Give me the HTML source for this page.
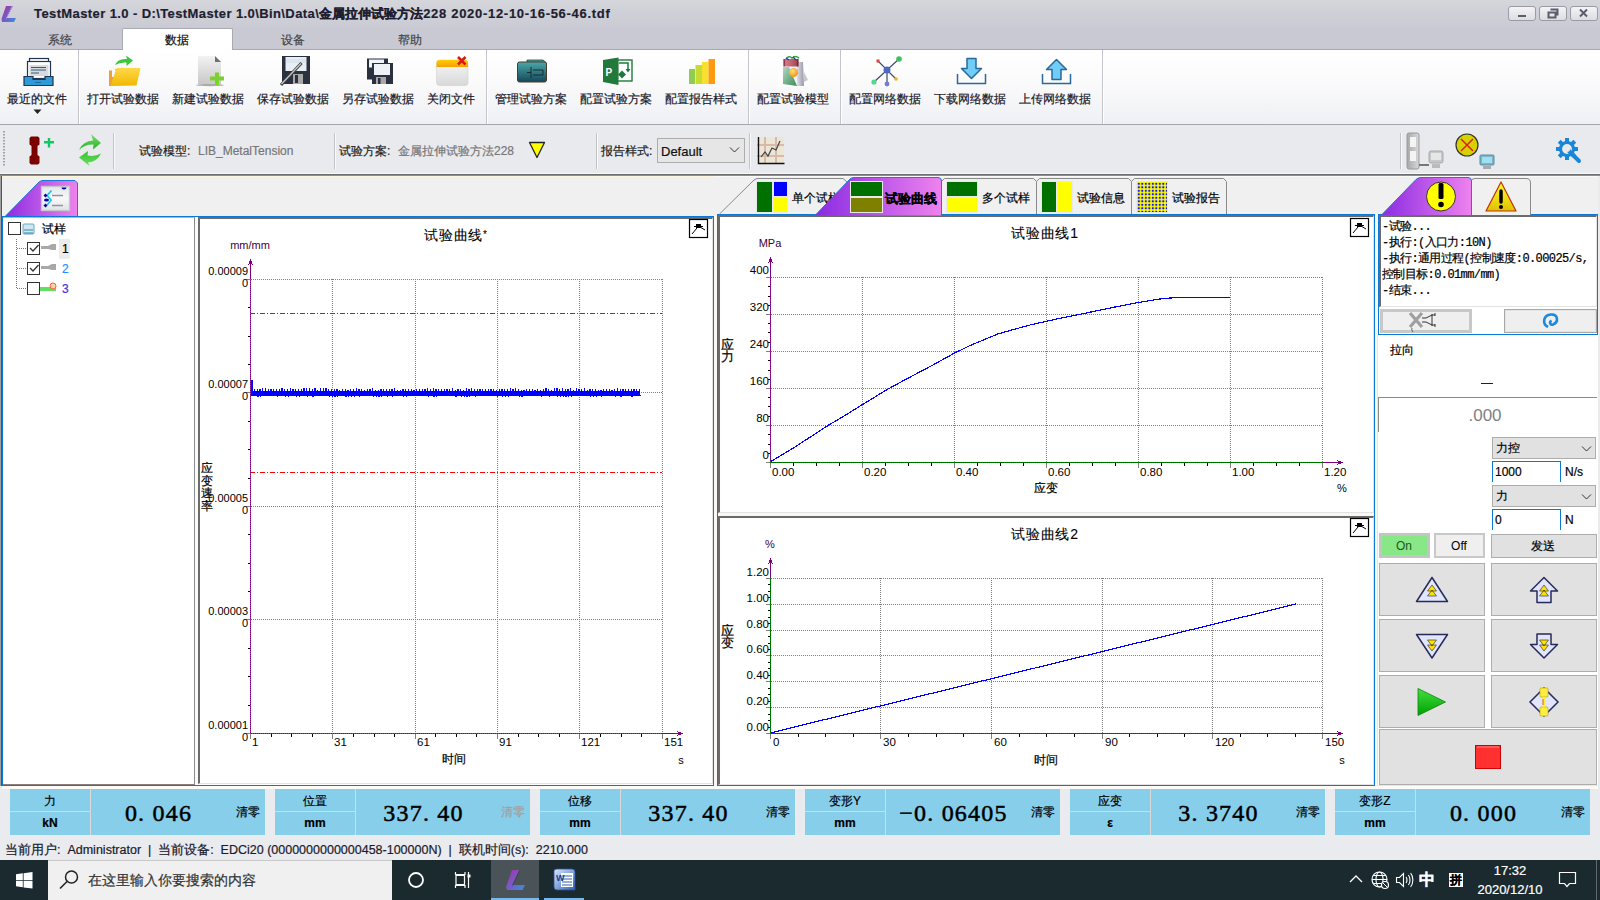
<!DOCTYPE html><html><head><meta charset="utf-8"><style>
*{box-sizing:border-box;margin:0;padding:0}
html,body{width:1600px;height:900px;overflow:hidden;background:#f0f0f0;font-family:"Liberation Sans",sans-serif;font-size:12px;color:#000}
.a{position:absolute}
.t{position:absolute;white-space:nowrap;line-height:1;-webkit-text-stroke:0.2px currentColor}
svg{position:absolute;overflow:visible}
</style></head><body>
<div class="a" style="left:0px;top:0px;width:1600px;height:28px;background:linear-gradient(#d5d6db,#cfd0d7 50%,#c9cad3)"></div>
<svg style="left:0px;top:4px" width="20" height="20" viewBox="0 0 20 20" ><defs><linearGradient id="lg1" x1="0" y1="0" x2="1" y2="1"><stop offset="0" stop-color="#b02aa8"/><stop offset="1" stop-color="#3a8ee0"/></linearGradient></defs><path d="M6 2 L13 2 L7 14 L16 14 L14 18 L2 18 L1.5 15 Z" fill="url(#lg1)"/><path d="M12 2.5 L6.5 14.5" stroke="#e8e8f0" stroke-width="1" stroke-dasharray="1 1"/></svg>
<div class="t" style="left:34px;top:7px;font-weight:bold;font-size:13px;color:#1e1e30"><span style="letter-spacing:0.4px">TestMaster 1.0 - D:\TestMaster 1.0\Bin\Data\</span>金属拉伸试验方法<span style="letter-spacing:0.7px">228 2020-12-10-16-56-46.tdf</span></div>
<div class="a" style="left:1508px;top:6px;width:28px;height:15px;border:1px solid #9a9ba5;border-radius:3px;background:linear-gradient(#f4f4f6,#dcdce2)"></div>
<div class="a" style="left:1539px;top:6px;width:28px;height:15px;border:1px solid #9a9ba5;border-radius:3px;background:linear-gradient(#f4f4f6,#dcdce2)"></div>
<div class="a" style="left:1570px;top:6px;width:28px;height:15px;border:1px solid #9a9ba5;border-radius:3px;background:linear-gradient(#f4f4f6,#dcdce2)"></div>
<svg style="left:1508px;top:6px" width="28" height="15" viewBox="0 0 28 15" ><rect x="10" y="9" width="8" height="2" fill="#5a5c6a"/></svg>
<svg style="left:1539px;top:6px" width="28" height="15" viewBox="0 0 28 15" ><path d="M11.5 3.5h7v5h-2M9.5 6.5h7v5h-7z" fill="none" stroke="#5a5c6a" stroke-width="2"/></svg>
<svg style="left:1570px;top:6px" width="28" height="15" viewBox="0 0 28 15" ><path d="M10 3.5l7 7M17 3.5l-7 7" stroke="#5a5c6a" stroke-width="2"/></svg>
<div class="a" style="left:0px;top:28px;width:1600px;height:22px;background:#c8c9d3"></div>
<div class="a" style="left:0px;top:49px;width:122px;height:1px;background:#a8a9b4"></div>
<div class="a" style="left:233px;top:49px;width:1367px;height:1px;background:#a8a9b4"></div>
<div class="a" style="left:122px;top:28px;width:111px;height:22px;background:#fff;border:1px solid #a9aab3;border-bottom:none;border-radius:2px 2px 0 0"></div>
<div class="t" style="left:-140px;top:34px;width:400px;text-align:center;font-size:12px;color:#444;">系统</div>
<div class="t" style="left:-23px;top:34px;width:400px;text-align:center;font-size:12px;color:#111;">数据</div>
<div class="t" style="left:93px;top:34px;width:400px;text-align:center;font-size:12px;color:#444;">设备</div>
<div class="t" style="left:210px;top:34px;width:400px;text-align:center;font-size:12px;color:#444;">帮助</div>
<div class="a" style="left:0px;top:50px;width:1600px;height:75px;background:linear-gradient(#ffffff,#fafafb 45%,#eff0f4);border-bottom:1px solid #a4a5ad"></div>
<div class="a" style="left:78px;top:50px;width:1px;height:74px;background:#c4c5cc"></div>
<div class="a" style="left:79px;top:50px;width:1px;height:74px;background:#fff"></div>
<div class="a" style="left:486px;top:50px;width:1px;height:74px;background:#c4c5cc"></div>
<div class="a" style="left:487px;top:50px;width:1px;height:74px;background:#fff"></div>
<div class="a" style="left:748px;top:50px;width:1px;height:74px;background:#c4c5cc"></div>
<div class="a" style="left:749px;top:50px;width:1px;height:74px;background:#fff"></div>
<div class="a" style="left:840px;top:50px;width:1px;height:74px;background:#c4c5cc"></div>
<div class="a" style="left:841px;top:50px;width:1px;height:74px;background:#fff"></div>
<div class="a" style="left:1102px;top:50px;width:1px;height:74px;background:#c4c5cc"></div>
<div class="a" style="left:1103px;top:50px;width:1px;height:74px;background:#fff"></div>
<div class="t" style="left:-163px;top:93px;width:400px;text-align:center;font-size:12px;color:#1a1a2a">最近的文件</div>
<div class="t" style="left:-77px;top:93px;width:400px;text-align:center;font-size:12px;color:#1a1a2a">打开试验数据</div>
<div class="t" style="left:8px;top:93px;width:400px;text-align:center;font-size:12px;color:#1a1a2a">新建试验数据</div>
<div class="t" style="left:93px;top:93px;width:400px;text-align:center;font-size:12px;color:#1a1a2a">保存试验数据</div>
<div class="t" style="left:178px;top:93px;width:400px;text-align:center;font-size:12px;color:#1a1a2a">另存试验数据</div>
<div class="t" style="left:251px;top:93px;width:400px;text-align:center;font-size:12px;color:#1a1a2a">关闭文件</div>
<div class="t" style="left:331px;top:93px;width:400px;text-align:center;font-size:12px;color:#1a1a2a">管理试验方案</div>
<div class="t" style="left:416px;top:93px;width:400px;text-align:center;font-size:12px;color:#1a1a2a">配置试验方案</div>
<div class="t" style="left:501px;top:93px;width:400px;text-align:center;font-size:12px;color:#1a1a2a">配置报告样式</div>
<div class="t" style="left:593px;top:93px;width:400px;text-align:center;font-size:12px;color:#1a1a2a">配置试验模型</div>
<div class="t" style="left:685px;top:93px;width:400px;text-align:center;font-size:12px;color:#1a1a2a">配置网络数据</div>
<div class="t" style="left:770px;top:93px;width:400px;text-align:center;font-size:12px;color:#1a1a2a">下载网络数据</div>
<div class="t" style="left:855px;top:93px;width:400px;text-align:center;font-size:12px;color:#1a1a2a">上传网络数据</div>
<svg style="left:33px;top:109px" width="10" height="6" viewBox="0 0 10 6" ><path d="M0.5 0.5h8l-4 4.5z" fill="#222"/></svg>
<div class="a" style="left:0px;top:125px;width:1600px;height:50px;background:#e9eaee"></div>
<div class="a" style="left:0px;top:173px;width:1600px;height:1px;background:#f8f8fa"></div>
<div class="a" style="left:0px;top:174px;width:1600px;height:1px;background:#6e6e6e"></div>
<div class="a" style="left:0px;top:175px;width:1600px;height:1px;background:#8c8c8c"></div>
<svg style="left:2px;top:131px" width="4" height="36" viewBox="0 0 4 36" ><rect x="1" y="0" width="2" height="1.5" fill="#a0a0a8"/><rect x="1" y="3" width="2" height="1.5" fill="#a0a0a8"/><rect x="1" y="6" width="2" height="1.5" fill="#a0a0a8"/><rect x="1" y="9" width="2" height="1.5" fill="#a0a0a8"/><rect x="1" y="12" width="2" height="1.5" fill="#a0a0a8"/><rect x="1" y="15" width="2" height="1.5" fill="#a0a0a8"/><rect x="1" y="18" width="2" height="1.5" fill="#a0a0a8"/><rect x="1" y="21" width="2" height="1.5" fill="#a0a0a8"/><rect x="1" y="24" width="2" height="1.5" fill="#a0a0a8"/><rect x="1" y="27" width="2" height="1.5" fill="#a0a0a8"/><rect x="1" y="30" width="2" height="1.5" fill="#a0a0a8"/><rect x="1" y="33" width="2" height="1.5" fill="#a0a0a8"/></svg>
<svg style="left:25px;top:135px" width="35" height="32" viewBox="0 0 35 32" ><path d="M6 1.5h7l1.5 1.5v6.5l-2 1.5v9l2 1.5v6.5l-1.5 1.5h-7l-1.5 -1.5v-6.5l2 -1.5v-9l-2 -1.5v-6.5z" fill="#7d0000"/><path d="M19 7.2h10M24 3v9.5" stroke="#10c868" stroke-width="2.4"/></svg>
<svg style="left:77px;top:133px" width="26" height="34" viewBox="0 0 26 34" ><defs><linearGradient id="gr1" x1="0" y1="0" x2="0" y2="1"><stop offset="0" stop-color="#7ee070"/><stop offset="1" stop-color="#22b020"/></linearGradient><linearGradient id="gr2" x1="0" y1="0" x2="0" y2="1"><stop offset="0" stop-color="#30c030"/><stop offset="1" stop-color="#70e060"/></linearGradient></defs><path d="M2 17 Q6 8 16 7.5 L14 1 L24 10 L16 16.5 L16.5 11.5 Q8 11 2 17z" fill="url(#gr1)"/><path d="M24 20.5 Q20 29 11 29.5 L12.5 33 L2 24.5 L11 18 L10.5 22.5 Q18 24 24 20.5z" fill="url(#gr2)"/></svg>
<div class="a" style="left:113px;top:133px;width:1px;height:36px;background:#c2c3c8"></div>
<div class="a" style="left:114px;top:133px;width:1px;height:36px;background:#fafafa"></div>
<div class="a" style="left:334px;top:133px;width:1px;height:36px;background:#c2c3c8"></div>
<div class="a" style="left:335px;top:133px;width:1px;height:36px;background:#fafafa"></div>
<div class="a" style="left:596px;top:133px;width:1px;height:36px;background:#c2c3c8"></div>
<div class="a" style="left:597px;top:133px;width:1px;height:36px;background:#fafafa"></div>
<div class="a" style="left:749px;top:133px;width:1px;height:36px;background:#c2c3c8"></div>
<div class="a" style="left:750px;top:133px;width:1px;height:36px;background:#fafafa"></div>
<div class="a" style="left:1400px;top:133px;width:1px;height:36px;background:#c2c3c8"></div>
<div class="a" style="left:1401px;top:133px;width:1px;height:36px;background:#fafafa"></div>
<div class="t" style="left:139px;top:145px;font-size:12px;color:#222">试验模型:</div>
<div class="t" style="left:198px;top:145px;font-size:12px;color:#777">LIB_MetalTension</div>
<div class="t" style="left:339px;top:145px;font-size:12px;color:#222">试验方案:</div>
<div class="t" style="left:398px;top:145px;font-size:12px;color:#777">金属拉伸试验方法228</div>
<svg style="left:528px;top:141px" width="19" height="19" viewBox="0 0 19 19" ><path d="M1.5 1.5h15l-7.5 15z" fill="#ffff00" stroke="#222" stroke-width="1.3" stroke-linejoin="round"/></svg>
<div class="t" style="left:601px;top:145px;font-size:12px;color:#222">报告样式:</div>
<div class="a" style="left:657px;top:138px;width:88px;height:25px;background:#e6e6e6;border:1px solid #adadad"></div>
<div class="t" style="left:661px;top:145px;font-size:13px;color:#111">Default</div>
<svg style="left:729px;top:146px" width="12" height="8" viewBox="0 0 12 8" ><path d="M1 1.5l4.5 4.5 4.5-4.5" fill="none" stroke="#333" stroke-width="1"/></svg>
<svg style="left:755px;top:135px" width="30" height="30" viewBox="0 0 30 30" ><rect x="2" y="2" width="27" height="26" fill="#ece6d6"/><path d="M2 10h27M2 21h27M10 2v26M21 2v26" stroke="#d9b9a9" stroke-width="2"/><path d="M3.5 2v26.5h26" fill="none" stroke="#111" stroke-width="1.4"/><path d="M6 22l4-5 3 4 4-8 4 2 4-9" fill="none" stroke="#444" stroke-width="1.2"/></svg>
<svg style="left:1405px;top:131px" width="45" height="42" viewBox="0 0 45 42" ><defs><linearGradient id="gm1" x1="0" x2="1"><stop offset="0" stop-color="#a8a8a8"/><stop offset="1" stop-color="#d8d8d8"/></linearGradient></defs><rect x="2" y="2" width="12" height="36" rx="2" fill="url(#gm1)" stroke="#9a9a9a"/><rect x="5" y="6" width="6" height="10" fill="#f4f4f4"/><rect x="5" y="20" width="6" height="10" fill="#f4f4f4"/><path d="M14 34h10" stroke="#777" stroke-width="2"/><rect x="24" y="20" width="14" height="12" rx="2" fill="#c8c8c8" stroke="#aaa"/><rect x="26" y="22" width="10" height="7" fill="#e6e6e6"/><rect x="27" y="33" width="8" height="4" fill="#bbb"/></svg>
<svg style="left:1452px;top:131px" width="46" height="40" viewBox="0 0 46 40" ><circle cx="15" cy="14" r="11" fill="#d6d200" stroke="#333" stroke-width="1.2"/><path d="M9 8l12 12M21 8l-12 12" stroke="#e02020" stroke-width="1.5"/><rect x="28" y="24" width="14" height="10" rx="1" fill="#7fb3c9" stroke="#5a8da3"/><rect x="30" y="26" width="10" height="6" fill="#9fe0f0"/><rect x="31" y="35" width="8" height="3" fill="#aaa"/></svg>
<svg style="left:1555px;top:137px" width="30" height="28" viewBox="0 0 30 28" ><g fill="none" stroke="#1a86d8" stroke-width="3.2"><circle cx="12" cy="12" r="6.5"/></g><g fill="#1a86d8"><rect x="10" y="1" width="4" height="5" transform="rotate(0 12 12)"/><rect x="10" y="1" width="4" height="5" transform="rotate(45 12 12)"/><rect x="10" y="1" width="4" height="5" transform="rotate(90 12 12)"/><rect x="10" y="1" width="4" height="5" transform="rotate(135 12 12)"/><rect x="10" y="1" width="4" height="5" transform="rotate(180 12 12)"/><rect x="10" y="1" width="4" height="5" transform="rotate(225 12 12)"/><rect x="10" y="1" width="4" height="5" transform="rotate(270 12 12)"/><rect x="10" y="1" width="4" height="5" transform="rotate(315 12 12)"/></g><path d="M13 13l11 11" stroke="#1a86d8" stroke-width="4" stroke-linecap="round"/><circle cx="12" cy="12" r="3" fill="#e9eaee"/></svg>
<div class="a" style="left:0px;top:176px;width:1600px;height:41px;background:#f0f0f0"></div>
<div class="a" style="left:0px;top:176px;width:1600px;height:1px;background:#fafafa"></div>
<div class="a" style="left:2px;top:176px;width:712px;height:1px;background:#fdf6dc"></div>
<svg style="left:0px;top:170px" width="82" height="50" viewBox="0 0 82 50" ><defs><linearGradient id="pg" x1="0" x2="1"><stop offset="0" stop-color="#8a2be2"/><stop offset="1" stop-color="#ee82ee"/></linearGradient></defs><path d="M4.5 47 L39 12 L42 10.5 L75 10.5 L77.5 13 L77.5 47 Z" fill="url(#pg)" stroke="#1a7ad4" stroke-width="1"/><rect x="5" y="46" width="72" height="1" fill="#f080f0"/></svg>
<svg style="left:40px;top:185px" width="32" height="27" viewBox="0 0 32 27" ><defs><linearGradient id="ig" x1="0" y1="0" x2="0" y2="1"><stop offset="0" stop-color="#e4e8ec"/><stop offset="0.5" stop-color="#f8f8f8"/><stop offset="1" stop-color="#e0e4e8"/></linearGradient></defs><rect x="1.5" y="1.5" width="28" height="24" fill="url(#ig)" stroke="#c4c8cc" stroke-width="1.4"/><path d="M12 10.5h11M12 20.5h11" stroke="#9890a8" stroke-width="1.6"/><path d="M11.5 5.5l-4.5 5 4.5 5M11.5 15l-4.5 5" fill="none" stroke="#10c8e0" stroke-width="1.6"/><path d="M5.5 8.5l2 2-2 2-2-2z M5.5 18.5l2 2-2 2-2-2z" fill="#0000b0"/><ellipse cx="6.5" cy="15" rx="2.5" ry="1.6" fill="#0000b0"/><path d="M21.5 2.5h5a2.5 2 0 0 1 -5 0z" fill="#0000b0"/></svg>
<div class="a" style="left:0px;top:176px;width:1px;height:610px;background:#a0a0a0"></div>
<div class="a" style="left:1px;top:176px;width:1px;height:610px;background:#555"></div>
<div class="a" style="left:2px;top:216px;width:712px;height:570px;border:1px solid #0a78d7;background:#fff"></div>
<div class="a" style="left:3px;top:217px;width:192px;height:568px;background:#fff;border-top:1px solid #b8b8b8;border-right:1px solid #878c92;border-bottom:1px solid #8a7f7a"></div>
<div class="a" style="left:195px;top:217px;width:3px;height:568px;background:#fdfaf6"></div>
<div class="a" style="left:198px;top:217px;width:515px;height:567px;background:#fff;border-left:2px solid #6b6b6b;border-top:2px solid #6b6b6b;border-right:1px solid #e3e3e3;border-bottom:1px solid #e3e3e3"></div>
<div class="a" style="left:714px;top:216px;width:3px;height:570px;background:#fbf8f4"></div>
<div class="a" style="left:717px;top:214px;width:658px;height:572px;border:1px solid #0a78d7;background:#fbf8f4"></div>
<div class="a" style="left:718px;top:215px;width:656px;height:298px;background:#fff;border-left:2px solid #6b6b6b;border-top:2px solid #6b6b6b;border-right:1px solid #e3e3e3;border-bottom:1px solid #e3e3e3"></div>
<div class="a" style="left:718px;top:516px;width:656px;height:269px;background:#fff;border-left:2px solid #6b6b6b;border-top:2px solid #6b6b6b;border-right:1px solid #e3e3e3;border-bottom:1px solid #e3e3e3"></div>
<div class="a" style="left:1375px;top:214px;width:3px;height:572px;background:#fbf8f4"></div>
<div class="a" style="left:1377px;top:335px;width:221px;height:451px;background:#fff;border-left:1px solid #e6e6e6;border-bottom:1px solid #e6e6e6"></div>
<div class="a" style="left:1378px;top:214px;width:220px;height:121px;border:1px solid #0a78d7;background:#fff"></div>
<div class="a" style="left:1598px;top:176px;width:2px;height:610px;background:#eaebef"></div>
<svg style="left:0;top:0" width="1600" height="900" shape-rendering="crispEdges"><line x1="250.5" y1="279" x2="250.5" y2="733" stroke="#808080" stroke-dasharray="1 1"/><line x1="332.5" y1="279" x2="332.5" y2="733" stroke="#808080" stroke-dasharray="1 1"/><line x1="415.5" y1="279" x2="415.5" y2="733" stroke="#808080" stroke-dasharray="1 1"/><line x1="497.5" y1="279" x2="497.5" y2="733" stroke="#808080" stroke-dasharray="1 1"/><line x1="579.5" y1="279" x2="579.5" y2="733" stroke="#808080" stroke-dasharray="1 1"/><line x1="662.5" y1="279" x2="662.5" y2="733" stroke="#808080" stroke-dasharray="1 1"/><line x1="251" y1="279.5" x2="662" y2="279.5" stroke="#808080" stroke-dasharray="1 1"/><line x1="251" y1="392.5" x2="662" y2="392.5" stroke="#808080" stroke-dasharray="1 1"/><line x1="251" y1="506.5" x2="662" y2="506.5" stroke="#808080" stroke-dasharray="1 1"/><line x1="251" y1="619.5" x2="662" y2="619.5" stroke="#808080" stroke-dasharray="1 1"/><line x1="251" y1="733.5" x2="662" y2="733.5" stroke="#808080" stroke-dasharray="1 1"/><line x1="250" y1="313.5" x2="662" y2="313.5" stroke="#ff0000" stroke-dasharray="5 2 1 2"/><line x1="250" y1="472.5" x2="662" y2="472.5" stroke="#ff0000" stroke-dasharray="5 2 1 2"/><rect x="250" y="391" width="390" height="5" fill="#0000ff"/><rect x="251.0" y="390" width="1.3" height="2" fill="#0000ff"/><rect x="251.8" y="395" width="1.2" height="1" fill="#0000ff"/><rect x="253.8" y="389" width="1.3" height="3" fill="#0000ff"/><rect x="254.6" y="395" width="1.2" height="1" fill="#0000ff"/><rect x="256.5" y="389" width="1.3" height="3" fill="#0000ff"/><rect x="257.3" y="395" width="1.2" height="2" fill="#0000ff"/><rect x="259.2" y="389" width="1.3" height="3" fill="#0000ff"/><rect x="260.1" y="395" width="1.2" height="2" fill="#0000ff"/><rect x="262.0" y="388" width="1.3" height="4" fill="#0000ff"/><rect x="262.8" y="395" width="1.2" height="1" fill="#0000ff"/><rect x="264.8" y="388" width="1.3" height="4" fill="#0000ff"/><rect x="265.6" y="395" width="1.2" height="1" fill="#0000ff"/><rect x="267.5" y="389" width="1.3" height="3" fill="#0000ff"/><rect x="268.3" y="395" width="1.2" height="1" fill="#0000ff"/><rect x="270.2" y="389" width="1.3" height="3" fill="#0000ff"/><rect x="271.1" y="395" width="1.2" height="1" fill="#0000ff"/><rect x="273.0" y="389" width="1.3" height="3" fill="#0000ff"/><rect x="273.8" y="395" width="1.2" height="1" fill="#0000ff"/><rect x="275.8" y="389" width="1.3" height="3" fill="#0000ff"/><rect x="276.6" y="395" width="1.2" height="2" fill="#0000ff"/><rect x="278.5" y="389" width="1.3" height="3" fill="#0000ff"/><rect x="279.3" y="395" width="1.2" height="1" fill="#0000ff"/><rect x="281.2" y="388" width="1.3" height="4" fill="#0000ff"/><rect x="282.1" y="395" width="1.2" height="1" fill="#0000ff"/><rect x="284.0" y="389" width="1.3" height="3" fill="#0000ff"/><rect x="284.8" y="395" width="1.2" height="2" fill="#0000ff"/><rect x="286.8" y="389" width="1.3" height="3" fill="#0000ff"/><rect x="287.6" y="395" width="1.2" height="2" fill="#0000ff"/><rect x="289.5" y="388" width="1.3" height="4" fill="#0000ff"/><rect x="290.3" y="395" width="1.2" height="1" fill="#0000ff"/><rect x="292.2" y="389" width="1.3" height="3" fill="#0000ff"/><rect x="293.1" y="395" width="1.2" height="1" fill="#0000ff"/><rect x="295.0" y="389" width="1.3" height="3" fill="#0000ff"/><rect x="295.8" y="395" width="1.2" height="2" fill="#0000ff"/><rect x="297.8" y="389" width="1.3" height="3" fill="#0000ff"/><rect x="298.6" y="395" width="1.2" height="2" fill="#0000ff"/><rect x="300.5" y="389" width="1.3" height="3" fill="#0000ff"/><rect x="301.3" y="395" width="1.2" height="1" fill="#0000ff"/><rect x="303.2" y="388" width="1.3" height="4" fill="#0000ff"/><rect x="304.1" y="395" width="1.2" height="1" fill="#0000ff"/><rect x="306.0" y="388" width="1.3" height="4" fill="#0000ff"/><rect x="306.8" y="395" width="1.2" height="2" fill="#0000ff"/><rect x="308.8" y="388" width="1.3" height="4" fill="#0000ff"/><rect x="309.6" y="395" width="1.2" height="1" fill="#0000ff"/><rect x="311.5" y="389" width="1.3" height="3" fill="#0000ff"/><rect x="312.3" y="395" width="1.2" height="2" fill="#0000ff"/><rect x="314.2" y="388" width="1.3" height="4" fill="#0000ff"/><rect x="315.1" y="395" width="1.2" height="1" fill="#0000ff"/><rect x="317.0" y="390" width="1.3" height="2" fill="#0000ff"/><rect x="317.8" y="395" width="1.2" height="1" fill="#0000ff"/><rect x="319.8" y="388" width="1.3" height="4" fill="#0000ff"/><rect x="320.6" y="395" width="1.2" height="1" fill="#0000ff"/><rect x="322.5" y="388" width="1.3" height="4" fill="#0000ff"/><rect x="323.3" y="395" width="1.2" height="1" fill="#0000ff"/><rect x="325.2" y="388" width="1.3" height="4" fill="#0000ff"/><rect x="326.1" y="395" width="1.2" height="1" fill="#0000ff"/><rect x="328.0" y="389" width="1.3" height="3" fill="#0000ff"/><rect x="328.8" y="395" width="1.2" height="2" fill="#0000ff"/><rect x="330.8" y="389" width="1.3" height="3" fill="#0000ff"/><rect x="331.6" y="395" width="1.2" height="2" fill="#0000ff"/><rect x="333.5" y="389" width="1.3" height="3" fill="#0000ff"/><rect x="334.3" y="395" width="1.2" height="2" fill="#0000ff"/><rect x="336.2" y="389" width="1.3" height="3" fill="#0000ff"/><rect x="337.1" y="395" width="1.2" height="2" fill="#0000ff"/><rect x="339.0" y="390" width="1.3" height="2" fill="#0000ff"/><rect x="339.8" y="395" width="1.2" height="1" fill="#0000ff"/><rect x="341.8" y="389" width="1.3" height="3" fill="#0000ff"/><rect x="342.6" y="395" width="1.2" height="1" fill="#0000ff"/><rect x="344.5" y="389" width="1.3" height="3" fill="#0000ff"/><rect x="345.3" y="395" width="1.2" height="2" fill="#0000ff"/><rect x="347.2" y="390" width="1.3" height="2" fill="#0000ff"/><rect x="348.1" y="395" width="1.2" height="2" fill="#0000ff"/><rect x="350.0" y="389" width="1.3" height="3" fill="#0000ff"/><rect x="350.8" y="395" width="1.2" height="2" fill="#0000ff"/><rect x="352.8" y="389" width="1.3" height="3" fill="#0000ff"/><rect x="353.6" y="395" width="1.2" height="2" fill="#0000ff"/><rect x="355.5" y="388" width="1.3" height="4" fill="#0000ff"/><rect x="356.3" y="395" width="1.2" height="1" fill="#0000ff"/><rect x="358.2" y="389" width="1.3" height="3" fill="#0000ff"/><rect x="359.1" y="395" width="1.2" height="2" fill="#0000ff"/><rect x="361.0" y="389" width="1.3" height="3" fill="#0000ff"/><rect x="361.8" y="395" width="1.2" height="1" fill="#0000ff"/><rect x="363.8" y="390" width="1.3" height="2" fill="#0000ff"/><rect x="364.6" y="395" width="1.2" height="1" fill="#0000ff"/><rect x="366.5" y="389" width="1.3" height="3" fill="#0000ff"/><rect x="367.3" y="395" width="1.2" height="1" fill="#0000ff"/><rect x="369.2" y="389" width="1.3" height="3" fill="#0000ff"/><rect x="370.1" y="395" width="1.2" height="1" fill="#0000ff"/><rect x="372.0" y="388" width="1.3" height="4" fill="#0000ff"/><rect x="372.8" y="395" width="1.2" height="2" fill="#0000ff"/><rect x="374.8" y="390" width="1.3" height="2" fill="#0000ff"/><rect x="375.6" y="395" width="1.2" height="2" fill="#0000ff"/><rect x="377.5" y="390" width="1.3" height="2" fill="#0000ff"/><rect x="378.3" y="395" width="1.2" height="2" fill="#0000ff"/><rect x="380.2" y="389" width="1.3" height="3" fill="#0000ff"/><rect x="381.1" y="395" width="1.2" height="2" fill="#0000ff"/><rect x="383.0" y="389" width="1.3" height="3" fill="#0000ff"/><rect x="383.8" y="395" width="1.2" height="1" fill="#0000ff"/><rect x="385.8" y="389" width="1.3" height="3" fill="#0000ff"/><rect x="386.6" y="395" width="1.2" height="2" fill="#0000ff"/><rect x="388.5" y="389" width="1.3" height="3" fill="#0000ff"/><rect x="389.3" y="395" width="1.2" height="1" fill="#0000ff"/><rect x="391.2" y="389" width="1.3" height="3" fill="#0000ff"/><rect x="392.1" y="395" width="1.2" height="2" fill="#0000ff"/><rect x="394.0" y="388" width="1.3" height="4" fill="#0000ff"/><rect x="394.8" y="395" width="1.2" height="1" fill="#0000ff"/><rect x="396.8" y="390" width="1.3" height="2" fill="#0000ff"/><rect x="397.6" y="395" width="1.2" height="1" fill="#0000ff"/><rect x="399.5" y="390" width="1.3" height="2" fill="#0000ff"/><rect x="400.3" y="395" width="1.2" height="1" fill="#0000ff"/><rect x="402.2" y="389" width="1.3" height="3" fill="#0000ff"/><rect x="403.1" y="395" width="1.2" height="2" fill="#0000ff"/><rect x="405.0" y="389" width="1.3" height="3" fill="#0000ff"/><rect x="405.8" y="395" width="1.2" height="2" fill="#0000ff"/><rect x="407.8" y="389" width="1.3" height="3" fill="#0000ff"/><rect x="408.6" y="395" width="1.2" height="1" fill="#0000ff"/><rect x="410.5" y="389" width="1.3" height="3" fill="#0000ff"/><rect x="411.3" y="395" width="1.2" height="1" fill="#0000ff"/><rect x="413.2" y="390" width="1.3" height="2" fill="#0000ff"/><rect x="414.1" y="395" width="1.2" height="1" fill="#0000ff"/><rect x="416.0" y="389" width="1.3" height="3" fill="#0000ff"/><rect x="416.8" y="395" width="1.2" height="1" fill="#0000ff"/><rect x="418.8" y="389" width="1.3" height="3" fill="#0000ff"/><rect x="419.6" y="395" width="1.2" height="1" fill="#0000ff"/><rect x="421.5" y="389" width="1.3" height="3" fill="#0000ff"/><rect x="422.3" y="395" width="1.2" height="1" fill="#0000ff"/><rect x="424.2" y="389" width="1.3" height="3" fill="#0000ff"/><rect x="425.1" y="395" width="1.2" height="1" fill="#0000ff"/><rect x="427.0" y="388" width="1.3" height="4" fill="#0000ff"/><rect x="427.8" y="395" width="1.2" height="2" fill="#0000ff"/><rect x="429.8" y="389" width="1.3" height="3" fill="#0000ff"/><rect x="430.6" y="395" width="1.2" height="1" fill="#0000ff"/><rect x="432.5" y="388" width="1.3" height="4" fill="#0000ff"/><rect x="433.3" y="395" width="1.2" height="2" fill="#0000ff"/><rect x="435.2" y="389" width="1.3" height="3" fill="#0000ff"/><rect x="436.1" y="395" width="1.2" height="2" fill="#0000ff"/><rect x="438.0" y="389" width="1.3" height="3" fill="#0000ff"/><rect x="438.8" y="395" width="1.2" height="1" fill="#0000ff"/><rect x="440.8" y="389" width="1.3" height="3" fill="#0000ff"/><rect x="441.6" y="395" width="1.2" height="1" fill="#0000ff"/><rect x="443.5" y="389" width="1.3" height="3" fill="#0000ff"/><rect x="444.3" y="395" width="1.2" height="1" fill="#0000ff"/><rect x="446.2" y="389" width="1.3" height="3" fill="#0000ff"/><rect x="447.1" y="395" width="1.2" height="1" fill="#0000ff"/><rect x="449.0" y="389" width="1.3" height="3" fill="#0000ff"/><rect x="449.8" y="395" width="1.2" height="1" fill="#0000ff"/><rect x="451.8" y="388" width="1.3" height="4" fill="#0000ff"/><rect x="452.6" y="395" width="1.2" height="1" fill="#0000ff"/><rect x="454.5" y="390" width="1.3" height="2" fill="#0000ff"/><rect x="455.3" y="395" width="1.2" height="2" fill="#0000ff"/><rect x="457.2" y="389" width="1.3" height="3" fill="#0000ff"/><rect x="458.1" y="395" width="1.2" height="1" fill="#0000ff"/><rect x="460.0" y="389" width="1.3" height="3" fill="#0000ff"/><rect x="460.8" y="395" width="1.2" height="2" fill="#0000ff"/><rect x="462.8" y="390" width="1.3" height="2" fill="#0000ff"/><rect x="463.6" y="395" width="1.2" height="2" fill="#0000ff"/><rect x="465.5" y="388" width="1.3" height="4" fill="#0000ff"/><rect x="466.3" y="395" width="1.2" height="2" fill="#0000ff"/><rect x="468.2" y="389" width="1.3" height="3" fill="#0000ff"/><rect x="469.1" y="395" width="1.2" height="2" fill="#0000ff"/><rect x="471.0" y="388" width="1.3" height="4" fill="#0000ff"/><rect x="471.8" y="395" width="1.2" height="1" fill="#0000ff"/><rect x="473.8" y="389" width="1.3" height="3" fill="#0000ff"/><rect x="474.6" y="395" width="1.2" height="2" fill="#0000ff"/><rect x="476.5" y="389" width="1.3" height="3" fill="#0000ff"/><rect x="477.3" y="395" width="1.2" height="1" fill="#0000ff"/><rect x="479.2" y="389" width="1.3" height="3" fill="#0000ff"/><rect x="480.1" y="395" width="1.2" height="1" fill="#0000ff"/><rect x="482.0" y="389" width="1.3" height="3" fill="#0000ff"/><rect x="482.8" y="395" width="1.2" height="1" fill="#0000ff"/><rect x="484.8" y="389" width="1.3" height="3" fill="#0000ff"/><rect x="485.6" y="395" width="1.2" height="1" fill="#0000ff"/><rect x="487.5" y="389" width="1.3" height="3" fill="#0000ff"/><rect x="488.3" y="395" width="1.2" height="1" fill="#0000ff"/><rect x="490.2" y="389" width="1.3" height="3" fill="#0000ff"/><rect x="491.1" y="395" width="1.2" height="1" fill="#0000ff"/><rect x="493.0" y="389" width="1.3" height="3" fill="#0000ff"/><rect x="493.8" y="395" width="1.2" height="1" fill="#0000ff"/><rect x="495.8" y="390" width="1.3" height="2" fill="#0000ff"/><rect x="496.6" y="395" width="1.2" height="2" fill="#0000ff"/><rect x="498.5" y="389" width="1.3" height="3" fill="#0000ff"/><rect x="499.3" y="395" width="1.2" height="1" fill="#0000ff"/><rect x="501.2" y="389" width="1.3" height="3" fill="#0000ff"/><rect x="502.1" y="395" width="1.2" height="2" fill="#0000ff"/><rect x="504.0" y="389" width="1.3" height="3" fill="#0000ff"/><rect x="504.8" y="395" width="1.2" height="2" fill="#0000ff"/><rect x="506.8" y="389" width="1.3" height="3" fill="#0000ff"/><rect x="507.6" y="395" width="1.2" height="2" fill="#0000ff"/><rect x="509.5" y="388" width="1.3" height="4" fill="#0000ff"/><rect x="510.3" y="395" width="1.2" height="1" fill="#0000ff"/><rect x="512.2" y="389" width="1.3" height="3" fill="#0000ff"/><rect x="513.0" y="395" width="1.2" height="1" fill="#0000ff"/><rect x="515.0" y="388" width="1.3" height="4" fill="#0000ff"/><rect x="515.8" y="395" width="1.2" height="1" fill="#0000ff"/><rect x="517.8" y="389" width="1.3" height="3" fill="#0000ff"/><rect x="518.5" y="395" width="1.2" height="2" fill="#0000ff"/><rect x="520.5" y="390" width="1.3" height="2" fill="#0000ff"/><rect x="521.3" y="395" width="1.2" height="2" fill="#0000ff"/><rect x="523.2" y="390" width="1.3" height="2" fill="#0000ff"/><rect x="524.0" y="395" width="1.2" height="1" fill="#0000ff"/><rect x="526.0" y="389" width="1.3" height="3" fill="#0000ff"/><rect x="526.8" y="395" width="1.2" height="1" fill="#0000ff"/><rect x="528.8" y="389" width="1.3" height="3" fill="#0000ff"/><rect x="529.5" y="395" width="1.2" height="1" fill="#0000ff"/><rect x="531.5" y="389" width="1.3" height="3" fill="#0000ff"/><rect x="532.3" y="395" width="1.2" height="1" fill="#0000ff"/><rect x="534.2" y="390" width="1.3" height="2" fill="#0000ff"/><rect x="535.0" y="395" width="1.2" height="1" fill="#0000ff"/><rect x="537.0" y="389" width="1.3" height="3" fill="#0000ff"/><rect x="537.8" y="395" width="1.2" height="1" fill="#0000ff"/><rect x="539.8" y="390" width="1.3" height="2" fill="#0000ff"/><rect x="540.5" y="395" width="1.2" height="2" fill="#0000ff"/><rect x="542.5" y="389" width="1.3" height="3" fill="#0000ff"/><rect x="543.3" y="395" width="1.2" height="1" fill="#0000ff"/><rect x="545.2" y="388" width="1.3" height="4" fill="#0000ff"/><rect x="546.0" y="395" width="1.2" height="1" fill="#0000ff"/><rect x="548.0" y="389" width="1.3" height="3" fill="#0000ff"/><rect x="548.8" y="395" width="1.2" height="2" fill="#0000ff"/><rect x="550.8" y="390" width="1.3" height="2" fill="#0000ff"/><rect x="551.5" y="395" width="1.2" height="1" fill="#0000ff"/><rect x="553.5" y="388" width="1.3" height="4" fill="#0000ff"/><rect x="554.3" y="395" width="1.2" height="1" fill="#0000ff"/><rect x="556.2" y="388" width="1.3" height="4" fill="#0000ff"/><rect x="557.0" y="395" width="1.2" height="2" fill="#0000ff"/><rect x="559.0" y="389" width="1.3" height="3" fill="#0000ff"/><rect x="559.8" y="395" width="1.2" height="2" fill="#0000ff"/><rect x="561.8" y="388" width="1.3" height="4" fill="#0000ff"/><rect x="562.5" y="395" width="1.2" height="2" fill="#0000ff"/><rect x="564.5" y="389" width="1.3" height="3" fill="#0000ff"/><rect x="565.3" y="395" width="1.2" height="2" fill="#0000ff"/><rect x="567.2" y="389" width="1.3" height="3" fill="#0000ff"/><rect x="568.0" y="395" width="1.2" height="2" fill="#0000ff"/><rect x="570.0" y="388" width="1.3" height="4" fill="#0000ff"/><rect x="570.8" y="395" width="1.2" height="2" fill="#0000ff"/><rect x="572.8" y="390" width="1.3" height="2" fill="#0000ff"/><rect x="573.5" y="395" width="1.2" height="1" fill="#0000ff"/><rect x="575.5" y="388" width="1.3" height="4" fill="#0000ff"/><rect x="576.3" y="395" width="1.2" height="1" fill="#0000ff"/><rect x="578.2" y="389" width="1.3" height="3" fill="#0000ff"/><rect x="579.0" y="395" width="1.2" height="1" fill="#0000ff"/><rect x="581.0" y="389" width="1.3" height="3" fill="#0000ff"/><rect x="581.8" y="395" width="1.2" height="1" fill="#0000ff"/><rect x="583.8" y="388" width="1.3" height="4" fill="#0000ff"/><rect x="584.5" y="395" width="1.2" height="1" fill="#0000ff"/><rect x="586.5" y="390" width="1.3" height="2" fill="#0000ff"/><rect x="587.3" y="395" width="1.2" height="1" fill="#0000ff"/><rect x="589.2" y="389" width="1.3" height="3" fill="#0000ff"/><rect x="590.0" y="395" width="1.2" height="2" fill="#0000ff"/><rect x="592.0" y="389" width="1.3" height="3" fill="#0000ff"/><rect x="592.8" y="395" width="1.2" height="2" fill="#0000ff"/><rect x="594.8" y="389" width="1.3" height="3" fill="#0000ff"/><rect x="595.5" y="395" width="1.2" height="2" fill="#0000ff"/><rect x="597.5" y="390" width="1.3" height="2" fill="#0000ff"/><rect x="598.3" y="395" width="1.2" height="1" fill="#0000ff"/><rect x="600.2" y="390" width="1.3" height="2" fill="#0000ff"/><rect x="601.0" y="395" width="1.2" height="2" fill="#0000ff"/><rect x="603.0" y="389" width="1.3" height="3" fill="#0000ff"/><rect x="603.8" y="395" width="1.2" height="1" fill="#0000ff"/><rect x="605.8" y="389" width="1.3" height="3" fill="#0000ff"/><rect x="606.5" y="395" width="1.2" height="1" fill="#0000ff"/><rect x="608.5" y="389" width="1.3" height="3" fill="#0000ff"/><rect x="609.3" y="395" width="1.2" height="1" fill="#0000ff"/><rect x="611.2" y="390" width="1.3" height="2" fill="#0000ff"/><rect x="612.0" y="395" width="1.2" height="1" fill="#0000ff"/><rect x="614.0" y="389" width="1.3" height="3" fill="#0000ff"/><rect x="614.8" y="395" width="1.2" height="2" fill="#0000ff"/><rect x="616.8" y="388" width="1.3" height="4" fill="#0000ff"/><rect x="617.5" y="395" width="1.2" height="1" fill="#0000ff"/><rect x="619.5" y="389" width="1.3" height="3" fill="#0000ff"/><rect x="620.3" y="395" width="1.2" height="2" fill="#0000ff"/><rect x="622.2" y="389" width="1.3" height="3" fill="#0000ff"/><rect x="623.0" y="395" width="1.2" height="1" fill="#0000ff"/><rect x="625.0" y="389" width="1.3" height="3" fill="#0000ff"/><rect x="625.8" y="395" width="1.2" height="1" fill="#0000ff"/><rect x="627.8" y="389" width="1.3" height="3" fill="#0000ff"/><rect x="628.5" y="395" width="1.2" height="1" fill="#0000ff"/><rect x="630.5" y="389" width="1.3" height="3" fill="#0000ff"/><rect x="631.3" y="395" width="1.2" height="2" fill="#0000ff"/><rect x="633.2" y="389" width="1.3" height="3" fill="#0000ff"/><rect x="634.0" y="395" width="1.2" height="1" fill="#0000ff"/><rect x="636.0" y="389" width="1.3" height="3" fill="#0000ff"/><rect x="636.8" y="395" width="1.2" height="1" fill="#0000ff"/><rect x="638.8" y="389" width="1.3" height="3" fill="#0000ff"/><rect x="639.5" y="395" width="1.2" height="1" fill="#0000ff"/><rect x="251" y="380" width="1.5" height="12" fill="#0000ff"/><line x1="250.5" y1="261" x2="250.5" y2="734" stroke="#800080"/><line x1="250" y1="733.5" x2="681" y2="733.5" stroke="#800080"/><path d="M250.5 259 L253 265 L250.5 263.5 L248 265Z" fill="#800080"/><path d="M683 733.5 L677 736 L678.5 733.5 L677 731Z" fill="#800080"/><rect x="248" y="307" width="2" height="1" fill="#000"/><rect x="248" y="336" width="2" height="1" fill="#000"/><rect x="248" y="364" width="2" height="1" fill="#000"/><rect x="248" y="421" width="2" height="1" fill="#000"/><rect x="248" y="449" width="2" height="1" fill="#000"/><rect x="248" y="478" width="2" height="1" fill="#000"/><rect x="248" y="534" width="2" height="1" fill="#000"/><rect x="248" y="563" width="2" height="1" fill="#000"/><rect x="248" y="591" width="2" height="1" fill="#000"/><rect x="248" y="648" width="2" height="1" fill="#000"/><rect x="248" y="676" width="2" height="1" fill="#000"/><rect x="248" y="705" width="2" height="1" fill="#000"/><rect x="271" y="734" width="1" height="3" fill="#000"/><rect x="291" y="734" width="1" height="3" fill="#000"/><rect x="312" y="734" width="1" height="3" fill="#000"/><rect x="353" y="734" width="1" height="3" fill="#000"/><rect x="374" y="734" width="1" height="3" fill="#000"/><rect x="394" y="734" width="1" height="3" fill="#000"/><rect x="435" y="734" width="1" height="3" fill="#000"/><rect x="456" y="734" width="1" height="3" fill="#000"/><rect x="476" y="734" width="1" height="3" fill="#000"/><rect x="518" y="734" width="1" height="3" fill="#000"/><rect x="538" y="734" width="1" height="3" fill="#000"/><rect x="559" y="734" width="1" height="3" fill="#000"/><rect x="600" y="734" width="1" height="3" fill="#000"/><rect x="621" y="734" width="1" height="3" fill="#000"/><rect x="641" y="734" width="1" height="3" fill="#000"/><rect x="246" y="279" width="4" height="1" fill="#808080"/><rect x="246" y="392" width="4" height="1" fill="#808080"/><rect x="246" y="506" width="4" height="1" fill="#808080"/><rect x="246" y="619" width="4" height="1" fill="#808080"/><rect x="246" y="733" width="4" height="1" fill="#808080"/><rect x="250" y="734" width="1" height="5" fill="#808080"/><rect x="332" y="734" width="1" height="5" fill="#808080"/><rect x="415" y="734" width="1" height="5" fill="#808080"/><rect x="497" y="734" width="1" height="5" fill="#808080"/><rect x="579" y="734" width="1" height="5" fill="#808080"/><rect x="662" y="734" width="1" height="5" fill="#808080"/></svg>
<svg style="left:0;top:0" width="1600" height="900" shape-rendering="crispEdges"><line x1="250.5" y1="279" x2="250.5" y2="734" stroke="#9040a0" stroke-dasharray="1 1"/><line x1="250" y1="733.5" x2="662" y2="733.5" stroke="#9040a0" stroke-dasharray="1 1"/></svg>
<div class="t" style="left:101px;top:265px;width:147px;text-align:right;font-size:11px;line-height:12px;-webkit-text-stroke:0">0.00009<br>0</div>
<div class="t" style="left:101px;top:378px;width:147px;text-align:right;font-size:11px;line-height:12px;-webkit-text-stroke:0">0.00007<br>0</div>
<div class="t" style="left:101px;top:492px;width:147px;text-align:right;font-size:11px;line-height:12px;-webkit-text-stroke:0">0.00005<br>0</div>
<div class="t" style="left:101px;top:605px;width:147px;text-align:right;font-size:11px;line-height:12px;-webkit-text-stroke:0">0.00003<br>0</div>
<div class="t" style="left:101px;top:719px;width:147px;text-align:right;font-size:11px;line-height:12px;-webkit-text-stroke:0">0.00001<br>0</div>
<div class="t" style="left:252px;top:737px;font-size:11.5px;color:#000;-webkit-text-stroke:0">1</div>
<div class="t" style="left:334px;top:737px;font-size:11.5px;color:#000;-webkit-text-stroke:0">31</div>
<div class="t" style="left:417px;top:737px;font-size:11.5px;color:#000;-webkit-text-stroke:0">61</div>
<div class="t" style="left:499px;top:737px;font-size:11.5px;color:#000;-webkit-text-stroke:0">91</div>
<div class="t" style="left:581px;top:737px;font-size:11.5px;color:#000;-webkit-text-stroke:0">121</div>
<div class="t" style="left:664px;top:737px;font-size:11.5px;color:#000;-webkit-text-stroke:0">151</div>
<div class="t" style="left:254px;top:753px;width:400px;text-align:center;font-size:12px">时间</div>
<div class="t" style="left:481px;top:755px;width:400px;text-align:center;font-size:11px;-webkit-text-stroke:0">s</div>
<div class="t" style="left:50px;top:240px;width:400px;text-align:center;font-size:11px;color:#400040;-webkit-text-stroke:0">mm/mm</div>
<div class="t" style="left:256px;top:228px;width:400px;text-align:center;font-size:14px;letter-spacing:0.7px;-webkit-text-stroke:0.1px">试验曲线<span style="font-size:10px;position:relative;top:-2px">*</span></div>
<div class="t" style="left:201px;top:462px;width:13px;font-size:12px;line-height:12.6px;white-space:normal">应<br>变<br>速<br>率</div>
<svg style="left:689px;top:219px" width="19" height="19" viewBox="0 0 19 19" ><rect x="0.5" y="0.5" width="18" height="18" fill="#fff" stroke="#000" stroke-width="1.2"/><rect x="7" y="5" width="5" height="4" fill="#000"/><path d="M5 7.5h9M3 15l5-6M11 8l5 3" stroke="#000" stroke-width="1"/></svg>
<svg style="left:1350px;top:218px" width="19" height="19" viewBox="0 0 19 19" ><rect x="0.5" y="0.5" width="18" height="18" fill="#fff" stroke="#000" stroke-width="1.2"/><rect x="7" y="5" width="5" height="4" fill="#000"/><path d="M5 7.5h9M3 15l5-6M11 8l5 3" stroke="#000" stroke-width="1"/></svg>
<svg style="left:1350px;top:518px" width="19" height="19" viewBox="0 0 19 19" ><rect x="0.5" y="0.5" width="18" height="18" fill="#fff" stroke="#000" stroke-width="1.2"/><rect x="7" y="5" width="5" height="4" fill="#000"/><path d="M5 7.5h9M3 15l5-6M11 8l5 3" stroke="#000" stroke-width="1"/></svg>
<svg style="left:0;top:0" width="1600" height="900" shape-rendering="crispEdges"><line x1="770.5" y1="277" x2="770.5" y2="462" stroke="#808080" stroke-dasharray="1 1"/><line x1="862.5" y1="277" x2="862.5" y2="462" stroke="#808080" stroke-dasharray="1 1"/><line x1="954.5" y1="277" x2="954.5" y2="462" stroke="#808080" stroke-dasharray="1 1"/><line x1="1046.5" y1="277" x2="1046.5" y2="462" stroke="#808080" stroke-dasharray="1 1"/><line x1="1138.5" y1="277" x2="1138.5" y2="462" stroke="#808080" stroke-dasharray="1 1"/><line x1="1230.5" y1="277" x2="1230.5" y2="462" stroke="#808080" stroke-dasharray="1 1"/><line x1="1322.5" y1="277" x2="1322.5" y2="462" stroke="#808080" stroke-dasharray="1 1"/><line x1="771" y1="277.5" x2="1323" y2="277.5" stroke="#808080" stroke-dasharray="1 1"/><line x1="771" y1="314.5" x2="1323" y2="314.5" stroke="#808080" stroke-dasharray="1 1"/><line x1="771" y1="351.5" x2="1323" y2="351.5" stroke="#808080" stroke-dasharray="1 1"/><line x1="771" y1="388.5" x2="1323" y2="388.5" stroke="#808080" stroke-dasharray="1 1"/><line x1="771" y1="425.5" x2="1323" y2="425.5" stroke="#808080" stroke-dasharray="1 1"/><line x1="771" y1="462.5" x2="1323" y2="462.5" stroke="#808080" stroke-dasharray="1 1"/><path d="M770 462 L794 447.6 L828.5 425.2 L847 414.2 L862.6 404.5 L888.2 388.9 L908.4 378 L933.3 364.8 L954.3 353.2 L970 345.6 L985 339.3 L997.8 334 L1015 329.1 L1030 325 L1046.5 321.3 L1060 318.3 L1092.5 311.7 L1115 307 L1138.5 302.5 L1162.5 298.6 L1180 297.3 L1230.4 297.1" fill="none" stroke="#0000ff" stroke-width="1.2" shape-rendering="crispEdges"/><line x1="770.5" y1="259" x2="770.5" y2="463" stroke="#800080"/><line x1="770" y1="462.5" x2="1341" y2="462.5" stroke="#800080"/><line x1="770.5" y1="277" x2="770.5" y2="463" stroke="#008000" stroke-dasharray="1 1"/><line x1="770" y1="462.5" x2="1323" y2="462.5" stroke="#008000" stroke-dasharray="1 1"/><path d="M770.5 257 L773 263 L770.5 261.5 L768 263Z" fill="#800080"/><path d="M1343 462.5 L1337 465 L1338.5 462.5 L1337 460Z" fill="#800080"/><rect x="768" y="286" width="2" height="1" fill="#000"/><rect x="768" y="296" width="2" height="1" fill="#000"/><rect x="768" y="305" width="2" height="1" fill="#000"/><rect x="768" y="323" width="2" height="1" fill="#000"/><rect x="768" y="332" width="2" height="1" fill="#000"/><rect x="768" y="342" width="2" height="1" fill="#000"/><rect x="768" y="360" width="2" height="1" fill="#000"/><rect x="768" y="370" width="2" height="1" fill="#000"/><rect x="768" y="379" width="2" height="1" fill="#000"/><rect x="768" y="397" width="2" height="1" fill="#000"/><rect x="768" y="406" width="2" height="1" fill="#000"/><rect x="768" y="416" width="2" height="1" fill="#000"/><rect x="768" y="434" width="2" height="1" fill="#000"/><rect x="768" y="444" width="2" height="1" fill="#000"/><rect x="768" y="453" width="2" height="1" fill="#000"/><rect x="793" y="463" width="1" height="3" fill="#000"/><rect x="816" y="463" width="1" height="3" fill="#000"/><rect x="839" y="463" width="1" height="3" fill="#000"/><rect x="885" y="463" width="1" height="3" fill="#000"/><rect x="908" y="463" width="1" height="3" fill="#000"/><rect x="931" y="463" width="1" height="3" fill="#000"/><rect x="977" y="463" width="1" height="3" fill="#000"/><rect x="1000" y="463" width="1" height="3" fill="#000"/><rect x="1023" y="463" width="1" height="3" fill="#000"/><rect x="1069" y="463" width="1" height="3" fill="#000"/><rect x="1092" y="463" width="1" height="3" fill="#000"/><rect x="1115" y="463" width="1" height="3" fill="#000"/><rect x="1161" y="463" width="1" height="3" fill="#000"/><rect x="1184" y="463" width="1" height="3" fill="#000"/><rect x="1207" y="463" width="1" height="3" fill="#000"/><rect x="1253" y="463" width="1" height="3" fill="#000"/><rect x="1276" y="463" width="1" height="3" fill="#000"/><rect x="1299" y="463" width="1" height="3" fill="#000"/><rect x="766" y="277" width="4" height="1" fill="#808080"/><rect x="766" y="314" width="4" height="1" fill="#808080"/><rect x="766" y="351" width="4" height="1" fill="#808080"/><rect x="766" y="388" width="4" height="1" fill="#808080"/><rect x="766" y="425" width="4" height="1" fill="#808080"/><rect x="766" y="462" width="4" height="1" fill="#808080"/><rect x="770" y="463" width="1" height="5" fill="#808080"/><rect x="862" y="463" width="1" height="5" fill="#808080"/><rect x="954" y="463" width="1" height="5" fill="#808080"/><rect x="1046" y="463" width="1" height="5" fill="#808080"/><rect x="1138" y="463" width="1" height="5" fill="#808080"/><rect x="1230" y="463" width="1" height="5" fill="#808080"/><rect x="1322" y="463" width="1" height="5" fill="#808080"/></svg>
<div class="t" style="left:369px;top:265px;width:400px;text-align:right;font-size:11.5px;color:#000;-webkit-text-stroke:0">400</div>
<div class="t" style="left:369px;top:302px;width:400px;text-align:right;font-size:11.5px;color:#000;-webkit-text-stroke:0">320</div>
<div class="t" style="left:369px;top:339px;width:400px;text-align:right;font-size:11.5px;color:#000;-webkit-text-stroke:0">240</div>
<div class="t" style="left:369px;top:376px;width:400px;text-align:right;font-size:11.5px;color:#000;-webkit-text-stroke:0">160</div>
<div class="t" style="left:369px;top:413px;width:400px;text-align:right;font-size:11.5px;color:#000;-webkit-text-stroke:0">80</div>
<div class="t" style="left:369px;top:450px;width:400px;text-align:right;font-size:11.5px;color:#000;-webkit-text-stroke:0">0</div>
<div class="t" style="left:772px;top:467px;font-size:11.5px;color:#000;-webkit-text-stroke:0">0.00</div>
<div class="t" style="left:864px;top:467px;font-size:11.5px;color:#000;-webkit-text-stroke:0">0.20</div>
<div class="t" style="left:956px;top:467px;font-size:11.5px;color:#000;-webkit-text-stroke:0">0.40</div>
<div class="t" style="left:1048px;top:467px;font-size:11.5px;color:#000;-webkit-text-stroke:0">0.60</div>
<div class="t" style="left:1140px;top:467px;font-size:11.5px;color:#000;-webkit-text-stroke:0">0.80</div>
<div class="t" style="left:1232px;top:467px;font-size:11.5px;color:#000;-webkit-text-stroke:0">1.00</div>
<div class="t" style="left:1324px;top:467px;font-size:11.5px;color:#000;-webkit-text-stroke:0">1.20</div>
<div class="t" style="left:846px;top:482px;width:400px;text-align:center;font-size:12px">应变</div>
<div class="t" style="left:1142px;top:483px;width:400px;text-align:center;font-size:11px;-webkit-text-stroke:0">%</div>
<div class="t" style="left:570px;top:238px;width:400px;text-align:center;font-size:11px;color:#400040;-webkit-text-stroke:0">MPa</div>
<div class="t" style="left:845px;top:226px;width:400px;text-align:center;font-size:14px;letter-spacing:0.7px;-webkit-text-stroke:0.1px">试验曲线1</div>
<div class="t" style="left:721px;top:339px;width:14px;font-size:13px;line-height:12px;white-space:normal">应<br>力</div>
<svg style="left:0;top:0" width="1600" height="900" shape-rendering="crispEdges"><line x1="770.5" y1="578" x2="770.5" y2="733" stroke="#808080" stroke-dasharray="1 1"/><line x1="880.5" y1="578" x2="880.5" y2="733" stroke="#808080" stroke-dasharray="1 1"/><line x1="991.5" y1="578" x2="991.5" y2="733" stroke="#808080" stroke-dasharray="1 1"/><line x1="1102.5" y1="578" x2="1102.5" y2="733" stroke="#808080" stroke-dasharray="1 1"/><line x1="1212.5" y1="578" x2="1212.5" y2="733" stroke="#808080" stroke-dasharray="1 1"/><line x1="1322.5" y1="578" x2="1322.5" y2="733" stroke="#808080" stroke-dasharray="1 1"/><line x1="771" y1="578.5" x2="1323" y2="578.5" stroke="#808080" stroke-dasharray="1 1"/><line x1="771" y1="604.5" x2="1323" y2="604.5" stroke="#808080" stroke-dasharray="1 1"/><line x1="771" y1="630.5" x2="1323" y2="630.5" stroke="#808080" stroke-dasharray="1 1"/><line x1="771" y1="655.5" x2="1323" y2="655.5" stroke="#808080" stroke-dasharray="1 1"/><line x1="771" y1="681.5" x2="1323" y2="681.5" stroke="#808080" stroke-dasharray="1 1"/><line x1="771" y1="707.5" x2="1323" y2="707.5" stroke="#808080" stroke-dasharray="1 1"/><line x1="771" y1="733.5" x2="1323" y2="733.5" stroke="#808080" stroke-dasharray="1 1"/><path d="M770 733 L1296 604" fill="none" stroke="#0000ff" stroke-width="1.2" shape-rendering="crispEdges"/><line x1="770.5" y1="560" x2="770.5" y2="734" stroke="#800080"/><line x1="770" y1="733.5" x2="1341" y2="733.5" stroke="#800080"/><line x1="770.5" y1="578" x2="770.5" y2="734" stroke="#008000" stroke-dasharray="1 1"/><line x1="770" y1="733.5" x2="1323" y2="733.5" stroke="#008000" stroke-dasharray="1 1"/><path d="M770.5 558 L773 564 L770.5 562.5 L768 564Z" fill="#800080"/><path d="M1343 733.5 L1337 736 L1338.5 733.5 L1337 731Z" fill="#800080"/><rect x="768" y="584" width="2" height="1" fill="#000"/><rect x="768" y="591" width="2" height="1" fill="#000"/><rect x="768" y="597" width="2" height="1" fill="#000"/><rect x="768" y="610" width="2" height="1" fill="#000"/><rect x="768" y="617" width="2" height="1" fill="#000"/><rect x="768" y="623" width="2" height="1" fill="#000"/><rect x="768" y="636" width="2" height="1" fill="#000"/><rect x="768" y="643" width="2" height="1" fill="#000"/><rect x="768" y="649" width="2" height="1" fill="#000"/><rect x="768" y="662" width="2" height="1" fill="#000"/><rect x="768" y="668" width="2" height="1" fill="#000"/><rect x="768" y="675" width="2" height="1" fill="#000"/><rect x="768" y="688" width="2" height="1" fill="#000"/><rect x="768" y="694" width="2" height="1" fill="#000"/><rect x="768" y="701" width="2" height="1" fill="#000"/><rect x="768" y="714" width="2" height="1" fill="#000"/><rect x="768" y="720" width="2" height="1" fill="#000"/><rect x="768" y="727" width="2" height="1" fill="#000"/><rect x="798" y="734" width="1" height="3" fill="#000"/><rect x="825" y="734" width="1" height="3" fill="#000"/><rect x="853" y="734" width="1" height="3" fill="#000"/><rect x="908" y="734" width="1" height="3" fill="#000"/><rect x="936" y="734" width="1" height="3" fill="#000"/><rect x="963" y="734" width="1" height="3" fill="#000"/><rect x="1019" y="734" width="1" height="3" fill="#000"/><rect x="1046" y="734" width="1" height="3" fill="#000"/><rect x="1074" y="734" width="1" height="3" fill="#000"/><rect x="1129" y="734" width="1" height="3" fill="#000"/><rect x="1157" y="734" width="1" height="3" fill="#000"/><rect x="1184" y="734" width="1" height="3" fill="#000"/><rect x="1240" y="734" width="1" height="3" fill="#000"/><rect x="1267" y="734" width="1" height="3" fill="#000"/><rect x="1295" y="734" width="1" height="3" fill="#000"/><rect x="766" y="578" width="4" height="1" fill="#808080"/><rect x="766" y="604" width="4" height="1" fill="#808080"/><rect x="766" y="630" width="4" height="1" fill="#808080"/><rect x="766" y="655" width="4" height="1" fill="#808080"/><rect x="766" y="681" width="4" height="1" fill="#808080"/><rect x="766" y="707" width="4" height="1" fill="#808080"/><rect x="766" y="733" width="4" height="1" fill="#808080"/><rect x="770" y="734" width="1" height="5" fill="#808080"/><rect x="880" y="734" width="1" height="5" fill="#808080"/><rect x="991" y="734" width="1" height="5" fill="#808080"/><rect x="1102" y="734" width="1" height="5" fill="#808080"/><rect x="1212" y="734" width="1" height="5" fill="#808080"/><rect x="1322" y="734" width="1" height="5" fill="#808080"/></svg>
<div class="t" style="left:369px;top:567px;width:400px;text-align:right;font-size:11.5px;color:#000;-webkit-text-stroke:0">1.20</div>
<div class="t" style="left:369px;top:593px;width:400px;text-align:right;font-size:11.5px;color:#000;-webkit-text-stroke:0">1.00</div>
<div class="t" style="left:369px;top:619px;width:400px;text-align:right;font-size:11.5px;color:#000;-webkit-text-stroke:0">0.80</div>
<div class="t" style="left:369px;top:644px;width:400px;text-align:right;font-size:11.5px;color:#000;-webkit-text-stroke:0">0.60</div>
<div class="t" style="left:369px;top:670px;width:400px;text-align:right;font-size:11.5px;color:#000;-webkit-text-stroke:0">0.40</div>
<div class="t" style="left:369px;top:696px;width:400px;text-align:right;font-size:11.5px;color:#000;-webkit-text-stroke:0">0.20</div>
<div class="t" style="left:369px;top:722px;width:400px;text-align:right;font-size:11.5px;color:#000;-webkit-text-stroke:0">0.00</div>
<div class="t" style="left:773px;top:737px;font-size:11.5px;color:#000;-webkit-text-stroke:0">0</div>
<div class="t" style="left:883px;top:737px;font-size:11.5px;color:#000;-webkit-text-stroke:0">30</div>
<div class="t" style="left:994px;top:737px;font-size:11.5px;color:#000;-webkit-text-stroke:0">60</div>
<div class="t" style="left:1105px;top:737px;font-size:11.5px;color:#000;-webkit-text-stroke:0">90</div>
<div class="t" style="left:1215px;top:737px;font-size:11.5px;color:#000;-webkit-text-stroke:0">120</div>
<div class="t" style="left:1325px;top:737px;font-size:11.5px;color:#000;-webkit-text-stroke:0">150</div>
<div class="t" style="left:846px;top:754px;width:400px;text-align:center;font-size:12px">时间</div>
<div class="t" style="left:1142px;top:755px;width:400px;text-align:center;font-size:11px;-webkit-text-stroke:0">s</div>
<div class="t" style="left:570px;top:539px;width:400px;text-align:center;font-size:11px;color:#400040;-webkit-text-stroke:0">%</div>
<div class="t" style="left:845px;top:527px;width:400px;text-align:center;font-size:14px;letter-spacing:0.7px;-webkit-text-stroke:0.1px">试验曲线2</div>
<div class="t" style="left:721px;top:625px;width:14px;font-size:13px;line-height:11.5px;white-space:normal">应<br>变</div>
<svg style="left:0;top:0" width="1600" height="900"><path d="M719.5 214 L754 180 L757 178.5 L843 178.5 L847 182 L847 214" fill="#f0f0f0" stroke="#8a8a8a"/><path d="M941.5 214 L941.5 181.5 L944.5 178.5 L1033.5 178.5 L1036.5 181.5 L1036.5 214" fill="#f0f0f0" stroke="#8a8a8a"/><path d="M1036.5 214 L1036.5 181.5 L1039.5 178.5 L1128.5 178.5 L1131.5 181.5 L1131.5 214" fill="#f0f0f0" stroke="#8a8a8a"/><path d="M1131.5 214 L1131.5 181.5 L1134.5 178.5 L1223.5 178.5 L1226.5 181.5 L1226.5 214" fill="#f0f0f0" stroke="#8a8a8a"/></svg>
<svg style="left:756px;top:181px" width="33" height="33" viewBox="0 0 33 33" ><rect x="0.5" y="0.5" width="16" height="31" fill="#007000" stroke="#e8e8e8"/><rect x="17.5" y="0.5" width="14" height="15" fill="#0000ff" stroke="#e8e8e8"/><rect x="17.5" y="16.5" width="14" height="15" fill="#ffff00" stroke="#e8e8e8"/></svg>
<div class="t" style="left:792px;top:192px;font-size:12px">单个试样</div>
<svg style="left:0;top:0" width="1600" height="900"><defs><linearGradient id="pg2" x1="0" x2="1"><stop offset="0" stop-color="#8a2be2"/><stop offset="1" stop-color="#ee82ee"/></linearGradient></defs><path d="M815 215.5 L850 179 Q851.5 177.5 854 177.5 L938 177.5 Q941.5 177.5 941.5 181 L941.5 215.5" fill="url(#pg2)" stroke="#1a7ad4"/></svg>
<svg style="left:850px;top:181px" width="34" height="33" viewBox="0 0 34 33" ><rect x="0.5" y="0.5" width="32" height="15" fill="#007000" stroke="#e8e8e8"/><rect x="0.5" y="16.5" width="32" height="15" fill="#808000" stroke="#e8e8e8"/></svg>
<div class="t" style="left:885px;top:192px;font-size:13px;font-weight:bold">试验曲线</div>
<svg style="left:946px;top:181px" width="33" height="33" viewBox="0 0 33 33" ><rect x="0.5" y="0.5" width="31" height="15" fill="#007000" stroke="#e8e8e8"/><rect x="0.5" y="16.5" width="31" height="15" fill="#ffff00" stroke="#e8e8e8"/></svg>
<div class="t" style="left:982px;top:192px;font-size:12px">多个试样</div>
<svg style="left:1041px;top:181px" width="33" height="33" viewBox="0 0 33 33" ><rect x="0.5" y="0.5" width="15" height="31" fill="#007000" stroke="#e8e8e8"/><rect x="16.5" y="0.5" width="15" height="31" fill="#ffff00" stroke="#e8e8e8"/></svg>
<div class="t" style="left:1077px;top:192px;font-size:12px">试验信息</div>
<svg style="left:1136px;top:181px" width="33" height="33" viewBox="0 0 33 33" ><defs><pattern id="dots" width="3.5" height="3.5" patternUnits="userSpaceOnUse" x="1" y="1"><rect width="3.5" height="3.5" fill="#ffff00"/><rect x="0.8" y="0.8" width="2" height="2" fill="#1010ff"/></pattern></defs><rect x="0.5" y="0.5" width="31" height="31" fill="url(#dots)" stroke="#e8e8e8"/></svg>
<div class="t" style="left:1172px;top:192px;font-size:12px">试验报告</div>
<svg style="left:0;top:0" width="1600" height="900"><path d="M1471 215 L1471 182 Q1471 178.5 1475 178.5 L1526 178.5 Q1530.5 178.5 1530.5 183 L1530.5 215" fill="#f0f0f0" stroke="#8a8a8a"/><path d="M1381 215.5 L1416 179.5 Q1418 177.5 1421 177.5 L1468 177.5 Q1471.5 177.5 1471.5 181 L1471.5 215.5" fill="url(#pg2)" stroke="#1a7ad4"/><circle cx="1441" cy="196.5" r="14.5" fill="#ffff00" stroke="#333" stroke-width="1"/><rect x="1438.5" y="183" width="5" height="16" rx="1.5" fill="#000"/><circle cx="1441" cy="204.5" r="2.8" fill="#000"/><defs><linearGradient id="wy" x1="0" y1="0" x2="0" y2="1"><stop offset="0" stop-color="#ffff30"/><stop offset="1" stop-color="#e0c000"/></linearGradient></defs><path d="M1501 182 L1516 211 L1486 211 Z" fill="url(#wy)" stroke="#c03000" stroke-width="1.2" stroke-linejoin="round"/><path d="M1501 191v11" stroke="#000" stroke-width="3.5" stroke-linecap="round"/><circle cx="1501" cy="207" r="2" fill="#000"/></svg>
<svg style="left:0;top:0" width="1600" height="900" shape-rendering="crispEdges"><rect x="8.5" y="222.5" width="12" height="12" fill="#fff" stroke="#333"/><line x1="16.5" y1="239" x2="16.5" y2="289" stroke="#777" stroke-dasharray="1 1"/><line x1="17" y1="248.5" x2="27" y2="248.5" stroke="#777" stroke-dasharray="1 1"/><rect x="27.5" y="242.5" width="12" height="12" fill="#fff" stroke="#333"/><line x1="17" y1="268.5" x2="27" y2="268.5" stroke="#777" stroke-dasharray="1 1"/><rect x="27.5" y="262.5" width="12" height="12" fill="#fff" stroke="#333"/><line x1="17" y1="288.5" x2="27" y2="288.5" stroke="#777" stroke-dasharray="1 1"/><rect x="27.5" y="282.5" width="12" height="12" fill="#fff" stroke="#333"/></svg>
<svg style="left:0;top:0" width="1600" height="900"><path d="M30 248l3 3 5.5-6" fill="none" stroke="#333" stroke-width="1.3"/><path d="M30 268l3 3 5.5-6" fill="none" stroke="#333" stroke-width="1.3"/><path d="M41 246h7l4-2h4v6h-4l-4-1h-7z" fill="#a8a8a8"/><path d="M41 266h7l4-2h4v6h-4l-4-1h-7z" fill="#a8a8a8"/><rect x="40" y="287" width="16" height="4" fill="#60e060"/><circle cx="53" cy="286" r="3" fill="#ffd0a0" stroke="#ff6040" stroke-width="1"/><rect x="23" y="224" width="11" height="10" rx="1" fill="#cfe8f0" stroke="#6aa6c0"/><path d="M24 230h9M24 233h9" stroke="#3a86b0"/></svg>
<div class="t" style="left:42px;top:223px;font-size:12px">试样</div>
<div class="a" style="left:59px;top:239px;width:11px;height:20px;background:#ececec"></div>
<div class="t" style="left:62px;top:243px;font-size:12px">1</div>
<div class="t" style="left:62px;top:263px;font-size:12px;color:#1e90ff">2</div>
<div class="t" style="left:62px;top:283px;font-size:12px;color:#4b2fe0">3</div>
<div class="a" style="left:1379px;top:215px;width:218px;height:92px;background:#fff;border-left:2px solid #6b6b6b;border-top:2px solid #6b6b6b;border-right:1px solid #e3e3e3;border-bottom:1px solid #e3e3e3"></div>
<div class="t" style="left:1382px;top:220px;font-family:'Liberation Mono',monospace;font-size:12px;letter-spacing:-0.6px;line-height:14px">-试验...</div>
<div class="t" style="left:1382px;top:236px;font-family:'Liberation Mono',monospace;font-size:12px;letter-spacing:-0.6px;line-height:14px">-执行:(入口力:10N)</div>
<div class="t" style="left:1382px;top:252px;font-family:'Liberation Mono',monospace;font-size:12px;letter-spacing:-0.6px;line-height:14px">-执行:通用过程(控制速度:0.00025/s,</div>
<div class="t" style="left:1382px;top:268px;font-family:'Liberation Mono',monospace;font-size:12px;letter-spacing:-0.6px;line-height:14px">控制目标:0.01mm/mm)</div>
<div class="t" style="left:1382px;top:284px;font-family:'Liberation Mono',monospace;font-size:12px;letter-spacing:-0.6px;line-height:14px">-结束...</div>
<div class="a" style="left:1380px;top:309px;width:92px;height:24px;background:#efefef;border:3px solid #c8c8c8"></div>
<div class="a" style="left:1504px;top:309px;width:93px;height:24px;background:#efefef;border:1px solid #a8a8a8;box-shadow:inset 0 0 0 1px #e4e4e4"></div>
<svg style="left:1407px;top:311px" width="40" height="22" viewBox="0 0 40 22" ><path d="M3 2l12 14M15 2l-12 14" stroke="#a0a0a0" stroke-width="3.2"/><path d="M5 17q-1 2 1 4" fill="none" stroke="#444" stroke-width="0.8"/><path d="M15 7h4l6-3h3M15 11h4l6 3h3M25 3v12M28 2v3M28 13v3" fill="none" stroke="#333" stroke-width="1"/></svg>
<svg style="left:1540px;top:311px" width="22" height="22" viewBox="0 0 22 22" ><path d="M8 16 C2 13 3 4 11 3.5 C18 3 19 11 13 13.5 C10 14.5 9 11 11.5 9.5" fill="none" stroke="#1a8ae0" stroke-width="2.6"/></svg>
<div class="t" style="left:1390px;top:344px;font-size:12px">拉向</div>
<div class="a" style="left:1481px;top:383px;width:12px;height:1px;background:#222"></div>
<div class="a" style="left:1378px;top:397px;width:219px;height:1px;background:#8a8a8a"></div>
<div class="a" style="left:1378px;top:397px;width:1px;height:35px;background:#8a8a8a"></div>
<div class="t" style="left:1285px;top:407px;width:400px;text-align:center;font-size:17px;color:#808080;-webkit-text-stroke:0">.000</div>
<div class="a" style="left:1492px;top:437px;width:104px;height:22px;background:#e1e1e1;border:1px solid #adadad"></div>
<div class="t" style="left:1496px;top:442px;font-size:12px">力控</div>
<svg style="left:1581px;top:445px" width="12" height="8" viewBox="0 0 12 8" ><path d="M1 1.5l4.5 4.5 4.5-4.5" fill="none" stroke="#333" stroke-width="1"/></svg>
<div class="a" style="left:1492px;top:485px;width:104px;height:22px;background:#e1e1e1;border:1px solid #adadad"></div>
<div class="t" style="left:1496px;top:490px;font-size:12px">力</div>
<svg style="left:1581px;top:493px" width="12" height="8" viewBox="0 0 12 8" ><path d="M1 1.5l4.5 4.5 4.5-4.5" fill="none" stroke="#333" stroke-width="1"/></svg>
<div class="a" style="left:1492px;top:461px;width:69px;height:21px;background:#fff;border:1px solid #0a78d7;border-bottom:none"></div>
<div class="t" style="left:1495px;top:466px;font-size:12px">1000</div>
<div class="t" style="left:1565px;top:466px;font-size:12px">N/s</div>
<div class="a" style="left:1492px;top:509px;width:69px;height:21px;background:#fff;border:1px solid #0a78d7;border-bottom:none"></div>
<div class="t" style="left:1495px;top:514px;font-size:12px">0</div>
<div class="t" style="left:1565px;top:514px;font-size:12px">N</div>
<div class="a" style="left:1379px;top:533px;width:51px;height:25px;background:#88e888;border:3px solid #c4c4c4"></div>
<div class="t" style="left:1204px;top:540px;width:400px;text-align:center;font-size:12px;color:#1a5a1a;-webkit-text-stroke:0">On</div>
<div class="a" style="left:1434px;top:533px;width:51px;height:25px;background:#efefef;border:2px solid #c8c8c8"></div>
<div class="t" style="left:1259px;top:540px;width:400px;text-align:center;font-size:12px;-webkit-text-stroke:0">Off</div>
<div class="a" style="left:1491px;top:534px;width:106px;height:24px;background:#e1e1e1;border:1px solid #adadad"></div>
<div class="t" style="left:1343px;top:540px;width:400px;text-align:center;font-size:12px">发送</div>
<div class="a" style="left:1379px;top:563px;width:106px;height:53px;background:#e1e1e1;border:1px solid #adadad"></div>
<div class="a" style="left:1491px;top:563px;width:106px;height:53px;background:#e1e1e1;border:1px solid #adadad"></div>
<div class="a" style="left:1379px;top:619px;width:106px;height:53px;background:#e1e1e1;border:1px solid #adadad"></div>
<div class="a" style="left:1491px;top:619px;width:106px;height:53px;background:#e1e1e1;border:1px solid #adadad"></div>
<div class="a" style="left:1379px;top:675px;width:106px;height:53px;background:#e1e1e1;border:1px solid #adadad"></div>
<div class="a" style="left:1491px;top:675px;width:106px;height:53px;background:#e1e1e1;border:1px solid #adadad"></div>
<div class="a" style="left:1379px;top:729px;width:218px;height:56px;background:#e1e1e1;border:1px solid #adadad"></div>
<svg style="left:0;top:0" width="1600" height="900"><path d="M1432 577.5 L1447.5 601.5 L1416.5 601.5 Z" fill="#e0e6ff" stroke="#2a2a5a" stroke-width="1.5" stroke-linejoin="round"/><path d="M1432 585 l-4.5 6h9z M1432 590 l-4.5 6h9z" fill="#ffe000" stroke="#222" stroke-width="0.6"/><path d="M1544 577.5 L1557.5 591 L1551 591 L1551 602.5 L1537 602.5 L1537 591 L1530.5 591 Z" fill="#e0e6ff" stroke="#2a2a5a" stroke-width="1.5" stroke-linejoin="round"/><path d="M1544 585 l-4.5 6h9z M1544 590 l-4.5 6h9z" fill="#ffe000" stroke="#222" stroke-width="0.6"/><path d="M1432 658 L1447.5 634.5 L1416.5 634.5 Z" fill="#e0e6ff" stroke="#2a2a5a" stroke-width="1.5" stroke-linejoin="round"/><path d="M1432 651 l-4.5 -6h9z M1432 646 l-4.5 -6h9z" fill="#ffe000" stroke="#222" stroke-width="0.6"/><path d="M1544 658 L1557.5 644.5 L1551 644.5 L1551 634 L1537 634 L1537 644.5 L1530.5 644.5 Z" fill="#e0e6ff" stroke="#2a2a5a" stroke-width="1.5" stroke-linejoin="round"/><path d="M1544 651 l-4.5 -6h9z M1544 646 l-4.5 -6h9z" fill="#ffe000" stroke="#222" stroke-width="0.6"/><defs><linearGradient id="gp" x1="0" y1="0" x2="0" y2="1"><stop offset="0" stop-color="#40e040"/><stop offset="1" stop-color="#00a000"/></linearGradient></defs><path d="M1418 688.5 L1445.5 702 L1418 715.5 Z" fill="url(#gp)" stroke="#108010" stroke-width="0.8"/><path d="M1544 688 L1558 702 L1544 716 L1530 702 Z" fill="#e0e6ff" stroke="#2a2a5a" stroke-width="1.5"/><rect x="1540" y="688" width="8" height="9" rx="1" fill="#ffee40" stroke="#b0a000" stroke-width="0.6"/><rect x="1540" y="707" width="8" height="9" rx="1" fill="#ffee40" stroke="#b0a000" stroke-width="0.6"/><rect x="1542.5" y="697" width="3" height="10" fill="#ffee40"/><path d="M1543 699v6" stroke="#e03030" stroke-width="0.8"/><rect x="1475.5" y="745.5" width="25" height="23" fill="#ff3030" stroke="#d00000" stroke-width="1"/><path d="M1477 747h22" stroke="#ff8080" stroke-width="1"/></svg>
<div class="a" style="left:0px;top:786px;width:1600px;height:54px;background:#eaebef"></div>
<div class="a" style="left:2px;top:786px;width:1596px;height:3px;background:#fdfbf8"></div>
<div class="a" style="left:10px;top:789px;width:255px;height:46px;background:#87ceeb"></div>
<div class="a" style="left:90px;top:789px;width:1px;height:46px;background:#d8d8d8"></div>
<div class="a" style="left:10px;top:811px;width:80px;height:1px;background:#d8d8d8"></div>
<div class="t" style="left:-150px;top:795px;width:400px;text-align:center;font-size:12px">力</div>
<div class="t" style="left:-150px;top:817px;width:400px;text-align:center;font-size:12px;font-weight:bold">kN</div>
<div class="t" style="left:-41.5px;top:801px;width:400px;text-align:center;font-family:'Liberation Serif',serif;font-size:24px;-webkit-text-stroke:0.5px #000;letter-spacing:1.2px">0. 046</div>
<div class="t" style="left:48px;top:806px;width:400px;text-align:center;font-size:12px;color:#000">清零</div>
<div class="a" style="left:275px;top:789px;width:255px;height:46px;background:#87ceeb"></div>
<div class="a" style="left:355px;top:789px;width:1px;height:46px;background:#d8d8d8"></div>
<div class="a" style="left:275px;top:811px;width:80px;height:1px;background:#d8d8d8"></div>
<div class="t" style="left:115px;top:795px;width:400px;text-align:center;font-size:12px">位置</div>
<div class="t" style="left:115px;top:817px;width:400px;text-align:center;font-size:12px;font-weight:bold">mm</div>
<div class="t" style="left:223.5px;top:801px;width:400px;text-align:center;font-family:'Liberation Serif',serif;font-size:24px;-webkit-text-stroke:0.5px #000;letter-spacing:1.2px">337. 40</div>
<div class="t" style="left:313px;top:806px;width:400px;text-align:center;font-size:12px;color:#a0a0a0">清零</div>
<div class="a" style="left:540px;top:789px;width:255px;height:46px;background:#87ceeb"></div>
<div class="a" style="left:620px;top:789px;width:1px;height:46px;background:#d8d8d8"></div>
<div class="a" style="left:540px;top:811px;width:80px;height:1px;background:#d8d8d8"></div>
<div class="t" style="left:380px;top:795px;width:400px;text-align:center;font-size:12px">位移</div>
<div class="t" style="left:380px;top:817px;width:400px;text-align:center;font-size:12px;font-weight:bold">mm</div>
<div class="t" style="left:488.5px;top:801px;width:400px;text-align:center;font-family:'Liberation Serif',serif;font-size:24px;-webkit-text-stroke:0.5px #000;letter-spacing:1.2px">337. 40</div>
<div class="t" style="left:578px;top:806px;width:400px;text-align:center;font-size:12px;color:#000">清零</div>
<div class="a" style="left:805px;top:789px;width:255px;height:46px;background:#87ceeb"></div>
<div class="a" style="left:885px;top:789px;width:1px;height:46px;background:#d8d8d8"></div>
<div class="a" style="left:805px;top:811px;width:80px;height:1px;background:#d8d8d8"></div>
<div class="t" style="left:645px;top:795px;width:400px;text-align:center;font-size:12px">变形Y</div>
<div class="t" style="left:645px;top:817px;width:400px;text-align:center;font-size:12px;font-weight:bold">mm</div>
<div class="t" style="left:753.5px;top:801px;width:400px;text-align:center;font-family:'Liberation Serif',serif;font-size:24px;-webkit-text-stroke:0.5px #000;letter-spacing:1.2px">−0. 06405</div>
<div class="t" style="left:843px;top:806px;width:400px;text-align:center;font-size:12px;color:#000">清零</div>
<div class="a" style="left:1070px;top:789px;width:255px;height:46px;background:#87ceeb"></div>
<div class="a" style="left:1150px;top:789px;width:1px;height:46px;background:#d8d8d8"></div>
<div class="a" style="left:1070px;top:811px;width:80px;height:1px;background:#d8d8d8"></div>
<div class="t" style="left:910px;top:795px;width:400px;text-align:center;font-size:12px">应变</div>
<div class="t" style="left:910px;top:817px;width:400px;text-align:center;font-size:12px;font-weight:bold">ε</div>
<div class="t" style="left:1018.5px;top:801px;width:400px;text-align:center;font-family:'Liberation Serif',serif;font-size:24px;-webkit-text-stroke:0.5px #000;letter-spacing:1.2px">3. 3740</div>
<div class="t" style="left:1108px;top:806px;width:400px;text-align:center;font-size:12px;color:#000">清零</div>
<div class="a" style="left:1335px;top:789px;width:255px;height:46px;background:#87ceeb"></div>
<div class="a" style="left:1415px;top:789px;width:1px;height:46px;background:#d8d8d8"></div>
<div class="a" style="left:1335px;top:811px;width:80px;height:1px;background:#d8d8d8"></div>
<div class="t" style="left:1175px;top:795px;width:400px;text-align:center;font-size:12px">变形Z</div>
<div class="t" style="left:1175px;top:817px;width:400px;text-align:center;font-size:12px;font-weight:bold">mm</div>
<div class="t" style="left:1283.5px;top:801px;width:400px;text-align:center;font-family:'Liberation Serif',serif;font-size:24px;-webkit-text-stroke:0.5px #000;letter-spacing:1.2px">0. 000</div>
<div class="t" style="left:1373px;top:806px;width:400px;text-align:center;font-size:12px;color:#000">清零</div>
<div class="a" style="left:0px;top:840px;width:1600px;height:20px;background:#eaebef"></div>
<div class="t" style="left:5px;top:844px;font-size:12.5px;color:#1a1a2a">当前用户: &nbsp;Administrator &nbsp;| &nbsp;当前设备: &nbsp;EDCi20 (0000000000000458-100000N) &nbsp;| &nbsp;联机时间(s): &nbsp;2210.000</div>
<div class="a" style="left:0px;top:860px;width:1600px;height:40px;background:#1b2a2e"></div>
<svg style="left:16px;top:872px" width="17" height="17" viewBox="0 0 17 17" ><path d="M0 2.3L6.8 1.3V7.9H0zM7.6 1.2L16.5 0V7.9H7.6zM0 8.7H6.8V15.3L0 14.3zM7.6 8.7H16.5V16.6L7.6 15.4z" fill="#fff"/></svg>
<div class="a" style="left:48px;top:860px;width:344px;height:40px;background:#f0f0f0;border-top:1px solid #c8c8c8"></div>
<svg style="left:58px;top:869px" width="22" height="22" viewBox="0 0 22 22" ><circle cx="13.5" cy="8" r="6" fill="none" stroke="#222" stroke-width="1.5"/><path d="M9.3 12.3L2 19.5" stroke="#222" stroke-width="1.6"/></svg>
<div class="t" style="left:88px;top:873px;font-size:14px;color:#333">在这里输入你要搜索的内容</div>
<svg style="left:405px;top:869px" width="22" height="22" viewBox="0 0 22 22" ><circle cx="11" cy="11" r="7" fill="none" stroke="#fff" stroke-width="1.8"/></svg>
<svg style="left:454px;top:871px" width="20" height="18" viewBox="0 0 20 18" ><path d="M1.5 1v2.5h9.5V1M1.5 17v-2.5h9.5V17M2 4.5h8.5v9H2z M14.5 1v16" fill="none" stroke="#fff" stroke-width="1.2"/><rect x="13.5" y="3.5" width="3" height="3" fill="#fff"/></svg>
<div class="a" style="left:491px;top:860px;width:48px;height:40px;background:#4a5458"></div>
<div class="a" style="left:491px;top:898px;width:48px;height:2px;background:#76b9ed"></div>
<svg style="left:503px;top:868px" width="24" height="24" viewBox="0 0 24 24" ><defs><linearGradient id="lg2" x1="0" y1="0" x2="1" y2="1"><stop offset="0" stop-color="#b02aa8"/><stop offset="1" stop-color="#3a8ee0"/></linearGradient></defs><path d="M9 2 L17 2 L10 17 L22 17 L19.5 22 L4 22 L3 19 Z" fill="url(#lg2)"/><path d="M16.5 2.5 L9.5 17.5" stroke="#333" stroke-width="0.8"/></svg>
<div class="a" style="left:544px;top:898px;width:40px;height:2px;background:#76b9ed"></div>
<svg style="left:552px;top:867px" width="24" height="26" viewBox="0 0 24 26" ><defs><linearGradient id="wd" x1="0" y1="0" x2="1" y2="1"><stop offset="0" stop-color="#d8e8ff"/><stop offset="1" stop-color="#3060b0"/></linearGradient></defs><path d="M2 4 Q2 2 5 2 L20 2 Q23 2 23 5 L23 23 L5 23 Q2 23 2 20z" fill="url(#wd)" stroke="#2a50a0" stroke-width="0.8"/><rect x="9" y="6" width="12" height="14" fill="#fff"/><path d="M10 9h10M10 12h10M10 15h10M10 18h10" stroke="#3060b0"/><text x="4" y="14" font-size="9" font-weight="bold" fill="#1a3a90" font-family="Liberation Sans">W</text></svg>
<svg style="left:1349px;top:873px" width="16" height="12" viewBox="0 0 16 12" ><path d="M1 9l6-6 6 6" fill="none" stroke="#fff" stroke-width="1.3"/></svg>
<svg style="left:1371px;top:871px" width="19" height="18" viewBox="0 0 19 18" ><circle cx="8.5" cy="8.5" r="7.5" fill="none" stroke="#fff" stroke-width="1.2"/><ellipse cx="8.5" cy="8.5" rx="3.5" ry="7.5" fill="none" stroke="#fff" stroke-width="1.1"/><path d="M1 8.5h15M2.5 4.5h12M2.5 12.5h12" stroke="#fff" stroke-width="1.1"/><circle cx="14" cy="14" r="3.5" fill="#1b2a2e" stroke="#fff" stroke-width="1.2"/><path d="M12 12l4 4" stroke="#fff"/></svg>
<svg style="left:1395px;top:871px" width="18" height="18" viewBox="0 0 18 18" ><path d="M1.5 6.5h3l4-4v13l-4-4h-3z" fill="none" stroke="#fff" stroke-width="1.1"/><path d="M11 6c1.3 1.5 1.3 4.5 0 6M13.3 4c2.3 2.5 2.3 7.5 0 10M15.6 2.2c3 3.5 3 10 0 13.6" fill="none" stroke="#fff" stroke-width="1.1"/></svg>
<div class="t" style="left:1227px;top:872px;width:400px;text-align:center;font-size:16px;color:#fff;font-weight:bold">中</div>
<div class="a" style="left:1449px;top:873px;width:14px;height:14px;background:#fff"></div>
<div class="t" style="left:1256px;top:874px;width:400px;text-align:center;font-size:12px;color:#000;font-weight:bold">拼</div>
<div class="t" style="left:1310px;top:864px;width:400px;text-align:center;font-size:13px;color:#fff">17:32</div>
<div class="t" style="left:1310px;top:883px;width:400px;text-align:center;font-size:13px;color:#fff">2020/12/10</div>
<svg style="left:1558px;top:870px" width="20" height="20" viewBox="0 0 20 20" ><path d="M1.5 2.5h16v11h-6l-2.5 3-2.5-3h-5z" fill="none" stroke="#fff" stroke-width="1.2"/></svg>
<div class="a" style="left:1596px;top:860px;width:1px;height:40px;background:#606a6e"></div>
<svg style="left:0;top:0" width="1600" height="900"><defs><linearGradient id="docg" x1="0" y1="0" x2="0" y2="1"><stop offset="0" stop-color="#f2f2f2"/><stop offset="1" stop-color="#c8c8c8"/></linearGradient><linearGradient id="flg" x1="0" y1="0" x2="0" y2="1"><stop offset="0" stop-color="#ffd84a"/><stop offset="1" stop-color="#f0b800"/></linearGradient><linearGradient id="tealg" x1="0" y1="0" x2="0" y2="1"><stop offset="0" stop-color="#4aa8a8"/><stop offset="1" stop-color="#15485a"/></linearGradient><linearGradient id="clg" x1="0" y1="0" x2="0" y2="1"><stop offset="0" stop-color="#ffcc00"/><stop offset="1" stop-color="#f5a000"/></linearGradient><linearGradient id="cwg" x1="0" y1="0" x2="0" y2="1"><stop offset="0" stop-color="#f8f8f8"/><stop offset="1" stop-color="#d8d8d8"/></linearGradient></defs><rect x="29.5" y="58.5" width="19" height="5" fill="#fff" stroke="#1f3550" stroke-width="1.2"/><rect x="27.5" y="61.5" width="23" height="17" fill="#fff" stroke="#1f3550" stroke-width="1.2"/><rect x="29.5" y="65" width="19" height="11" fill="#d6dbe0"/><path d="M31 67.5h15M31 70h15M31 73h8" stroke="#2a4a6a" stroke-width="0.9"/><path d="M24 76.5h9v3h12v-3h8v9h-29z" fill="#2f9ad8" stroke="#1f3550" stroke-width="1.2"/><path d="M35.5 82.5h1M37.5 82.5h1M39.5 82.5h1" stroke="#1f3550"/><path d="M109 70.5h5v15.5h-5z" fill="#f0a030"/><path d="M112 67h18v10h-18z" fill="#f4f8ff"/><path d="M115 70h10M115 72.5h8" stroke="#6a9ad8" stroke-width="1.2"/><path d="M116.5 68 L140 68 Q140.5 68.5 140.3 69.5 L136.5 85.5 L110.5 86 Z" fill="url(#flg)"/><path d="M115 65 Q118 58 127 59 L126 55.5 L133 60.5 L126.5 66 L126.5 62.5 Q120 62 115 65z" fill="#3ac83a"/><ellipse cx="210" cy="85" rx="14" ry="1.2" fill="#aaa"/><path d="M198 56h17l6 6v22h-23z" fill="url(#docg)"/><path d="M215 56l6 6h-6z" fill="#707070"/><path d="M215 72.5h4v4h5v4h-5v4.5h-4v-4.5h-5v-4h5z" fill="#7cd030"/><path d="M282 56h28v28h-28z" fill="#2c3140"/><rect x="285.5" y="57" width="21" height="14" fill="#e8eef5"/><path d="M286 60h20M286 62h20" stroke="#c0ccd8" stroke-width="0.6"/><rect x="293" y="74" width="10" height="10" fill="#a8a8a8"/><rect x="295" y="75" width="3" height="8" fill="#2c3140"/><path d="M281 85 L301.5 63" stroke="#3a3a3a" stroke-width="3"/><path d="M281.5 84 L301 63.5" stroke="#c8c8c8" stroke-width="1.3"/><path d="M367 58.5h21v21h-21z" fill="#2c3140"/><rect x="369" y="59.5" width="15" height="8" fill="#f0f4f8"/><path d="M372 63h21v21h-21z" fill="#2c3140"/><rect x="374" y="64" width="16" height="11" fill="#eef2f6"/><rect x="376" y="77" width="10" height="7" fill="#a8a8a8"/><rect x="378" y="78" width="2.5" height="6" fill="#2c3140"/><rect x="436.5" y="60" width="31.5" height="25.5" rx="3" fill="url(#cwg)" stroke="#d0d0d0" stroke-width="0.6"/><path d="M436.5 67 V63 Q436.5 60 439.5 60 H465 Q468 60 468 63 V67z" fill="url(#clg)"/><path d="M458 57 L465.5 64.5 M465.5 57 L458 64.5" stroke="#d81818" stroke-width="2.6"/><path d="M527 60h16l3 2.5v3h-19z" fill="#3aa0a0" stroke="#4a3a30" stroke-width="0.8"/><rect x="517.5" y="62" width="29" height="20" rx="2" fill="url(#tealg)" stroke="#4a3a30" stroke-width="1"/><path d="M531 67v11M531 72.5h-4M533 70h10v5h-10" fill="none" stroke="#1a2a30" stroke-width="1"/><rect x="611" y="60" width="21" height="21" fill="#fff" stroke="#1e7a3a" stroke-width="1.4"/><rect x="613" y="62" width="6" height="17" fill="#dcdcdc"/><path d="M619 63h9v8" fill="none" stroke="#1e7a3a" stroke-width="1.5"/><path d="M625.5 69h5l-2.5 3.5z" fill="#1e7a3a"/><path d="M622 70.5l4 4-4 4-4-4z" fill="#1e7a3a"/><path d="M603 60 L618.5 57.5 V85 L603 82z" fill="#217a3c"/><text x="605.5" y="76" font-family="Liberation Sans" font-weight="bold" font-size="10" fill="#fff">P</text><rect x="689" y="69" width="6" height="15" fill="#90cc50"/><rect x="695.5" y="65" width="6.5" height="19" fill="#c8dc30"/><rect x="702" y="62" width="6.5" height="22" fill="#f8e030"/><rect x="708.5" y="59" width="6.5" height="25" fill="#ff9a10"/><rect x="778" y="55" width="32" height="32" fill="#fdfdfd"/><defs><linearGradient id="mg1" x1="0" y1="0" x2="1" y2="1"><stop offset="0" stop-color="#b0d8c0"/><stop offset="1" stop-color="#3e8a5a"/></linearGradient><linearGradient id="mr1" x1="0" y1="0" x2="1" y2="0"><stop offset="0" stop-color="#6a0a1a"/><stop offset="0.15" stop-color="#d07a88"/><stop offset="0.85" stop-color="#b04a5a"/><stop offset="1" stop-color="#5a0a1a"/></linearGradient><linearGradient id="mgr" x1="0" y1="0" x2="1" y2="0"><stop offset="0" stop-color="#e8e8f0"/><stop offset="1" stop-color="#9898a8"/></linearGradient><radialGradient id="mo1" cx="0.4" cy="0.35" r="0.7"><stop offset="0" stop-color="#ffe080"/><stop offset="1" stop-color="#f09010"/></radialGradient></defs><path d="M796 62 L803 62 L804 86 L797 86z" fill="url(#mgr)"/><path d="M804 72 L808 80 L804 82z" fill="#c8c8d0"/><path d="M783 66.5 L797 66.5 L797 86 L783 84z" fill="#f4f4f8"/><path d="M783 67 L789 67 L797 86 L783 84z" fill="url(#mg1)"/><rect x="783.5" y="59" width="15" height="7.5" fill="url(#mr1)"/><path d="M786 59 Q789 55 792 58 Q795 55 799 58" fill="none" stroke="#30a040" stroke-width="1.6"/><path d="M786 58 L789 60 M793 57 L796 60" stroke="#2040a0" stroke-width="1.3"/><circle cx="793.5" cy="72.5" r="4.5" fill="url(#mo1)"/><path d="M878 61L887 70L899 59M874 82L887 70L896 79M887 70V84" fill="none" stroke="#3a4a6a" stroke-width="1.2"/><circle cx="887" cy="70" r="3.5" fill="#4a6ac0"/><rect x="876.5" y="59.5" width="3" height="3" fill="#e04040"/><circle cx="899" cy="59" r="2.8" fill="#40c060"/><circle cx="874" cy="82" r="2.6" fill="#50d890"/><circle cx="887" cy="84" r="2.4" fill="#7080d0"/><circle cx="896" cy="79" r="1.8" fill="#f0b020"/><path d="M957.5 74v9.5h28v-9.5" fill="none" stroke="#2a6a9a" stroke-width="1.5"/><path d="M967 58.5h9v10h5.5l-10 10-10-10h5.5z" fill="#70cdf5" stroke="#2a6a9a" stroke-width="1.5" stroke-linejoin="round"/><path d="M1042.5 74v9.5h28v-9.5" fill="none" stroke="#2a6a9a" stroke-width="1.5"/><path d="M1052 79.5h9v-10h5.5l-10-10-10 10h5.5z" fill="#70cdf5" stroke="#2a6a9a" stroke-width="1.5" stroke-linejoin="round"/></svg>
</body></html>
